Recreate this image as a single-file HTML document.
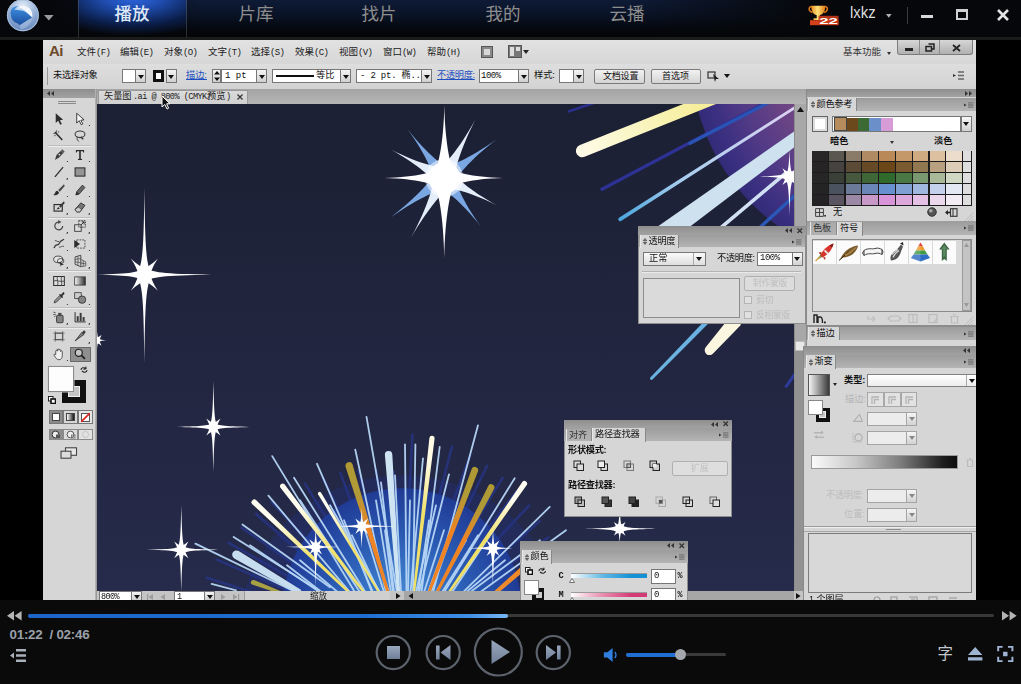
<!DOCTYPE html><html lang="zh"><head><meta charset="utf-8"><title>player</title><style>
*{box-sizing:border-box;margin:0;padding:0}
html,body{width:1021px;height:684px;overflow:hidden;background:#000}
body{font-family:"Liberation Sans","Noto Sans CJK SC",sans-serif;position:relative}
div,span,svg{position:absolute}
.t{white-space:nowrap;line-height:1;font-family:"Liberation Sans","Noto Sans CJK SC",sans-serif}
.m{white-space:nowrap;line-height:1;font-family:"Liberation Mono","Noto Sans CJK SC",monospace}
#top{left:0;top:0;width:1021px;height:39.5px;background:linear-gradient(rgba(0,0,0,0) 0,rgba(0,0,0,0) 37.5px,#1b1b1b 37.5px,#1b1b1b 100%),linear-gradient(90deg,#06070a 0,#06070a 5%,rgba(6,7,10,0) 20%,rgba(6,7,10,0) 62%,#06070a 80%),linear-gradient(#0e1b36 0,#0a1428 35%,#05080f 70%,#040404 100%)}
#bot{left:0;top:600px;width:1021px;height:84px;background:#0a0a0a}
#vid{left:43px;top:40px;width:933px;height:560px;background:#d8d8d8;overflow:hidden}
#vin{left:0;top:0;width:933px;height:560px;filter:blur(.6px)}
.in{background:#fff;border:1px solid #777}
.dd{background:linear-gradient(#f4f4f4,#d0d0d0);border:1px solid #777}
.btn{background:linear-gradient(#f2f2f2,#d4d4d4);border:1px solid #7a7a7a;border-radius:2px}
.ph{background:linear-gradient(#8e8e8e,#a2a2a2)}
.tabrow{background:linear-gradient(#9c9c9c,#b4b4b4)}
.tab{background:#d6d6d6}
.panel{background:#d6d6d6}
</style></head><body>
<div id="top"><div style="left:79px;top:0px;width:108px;height:39px;background:radial-gradient(ellipse 90% 100% at 50% -8%,#2c66de 0,#2150b6 28%,#14357c 52%,#0a1c44 74%,rgba(5,8,16,0) 100%);"></div><div style="left:78px;top:0px;width:1px;height:38px;background:linear-gradient(#3a4a6a,#2a2a2a)"></div><div style="left:186px;top:0px;width:1px;height:38px;background:linear-gradient(#3a4a6a,#2a2a2a)"></div><svg style="left:6px;top:0" width="34" height="33" viewBox="6 0 34 33">
<defs><radialGradient id="orb" cx="50%" cy="22%" r="80%"><stop offset="0" stop-color="#e4edf8"/><stop offset=".42" stop-color="#a6bee0"/><stop offset="1" stop-color="#5f81b8"/></radialGradient>
<linearGradient id="orbb" x1="0" y1="0" x2="0" y2="1"><stop offset="0" stop-color="#3f8fe2"/><stop offset="1" stop-color="#1c4f9e"/></linearGradient></defs>
<circle cx="22.9" cy="15.3" r="16" fill="url(#orb)"/>
<path d="M10.6 13C10.6 8.5 14 6 18.5 6.3L24 9L32.2 17.6L19.6 25.2L17.8 23.4C13.5 22.5 10.6 18.5 10.6 13Z" fill="url(#orbb)"/>
<path d="M15.5 8.2C18 5 25 4.6 29.5 8.2C32 10.5 32.6 14 32.3 17.4L23 9.6C20 7.4 17.5 7.6 15.5 8.2Z" fill="#f4f7fb"/>
<path d="M14 9.5C16 7.2 20 7 22.5 9L26 12C22 10 17 10 14 9.5Z" fill="#dbe7f5" opacity=".85"/>
<path d="M19.6 25.2L32.2 17.6C31 23 27 28 22 29.5C20 28.5 19.5 27 19.6 25.2Z" fill="#a9c1e2" opacity=".55"/>
<circle cx="22.9" cy="15.3" r="15.4" fill="none" stroke="#a9bfdd" stroke-width="1.2" opacity=".85"/>
</svg><svg style="left:44px;top:14.5px" width="10" height="6"><path d="M0 0H9.6L4.8 5.6Z" fill="#9a9a9a"/></svg><span class="t" style="left:114.5px;top:6px;font-size:17.5px;color:#dfe8f6;font-weight:500">播放</span><span class="t" style="left:238.5px;top:6px;font-size:17.5px;color:#8e8e8e;">片库</span><span class="t" style="left:361.5px;top:6px;font-size:17.5px;color:#8e8e8e;">找片</span><span class="t" style="left:485.5px;top:6px;font-size:17.5px;color:#8e8e8e;">我的</span><span class="t" style="left:609.5px;top:6px;font-size:17.5px;color:#8e8e8e;">云播</span><svg style="left:806px;top:3px" width="34" height="24" viewBox="806 3 34 24">
<defs><linearGradient id="cup" x1="0" y1="0" x2="1" y2="0"><stop offset="0" stop-color="#e98a1c"/><stop offset=".45" stop-color="#ffe27a"/><stop offset="1" stop-color="#e07a14"/></linearGradient></defs>
<path d="M811.5 6.5C808.5 6.5 808 11 812.5 12.5M825 6.5C828 6.5 828.5 11 824 12.5" fill="none" stroke="#d8761a" stroke-width="1.6"/>
<path d="M811.2 5.8H825.3C825.3 11.5 823 14.5 819.8 15.3V18.3H823V20H813.5V18.3H816.7V15.3C813.5 14.5 811.2 11.5 811.2 5.8Z" fill="url(#cup)"/>
<path d="M810 20.2H838.5V25.2H810Z" fill="#d6401a"/>
<path d="M818.5 15.8H838.5V24.6H818.5Z" fill="#c8381a" opacity=".9"/>
<text x="819.3" y="24" font-family="Liberation Sans,sans-serif" font-weight="bold" font-size="9.6" fill="#fff" textLength="18.6" lengthAdjust="spacingAndGlyphs">22</text>
</svg><span class="t" style="left:850px;top:4px;font-size:17px;color:#dcdcdc;transform:scaleX(.875);transform-origin:0 0">lxkz</span><svg style="left:885.5px;top:14px" width="6" height="4"><path d="M0 0H5.6L2.8 3.8Z" fill="#b0b0b0"/></svg><div style="left:907px;top:7px;width:1px;height:17px;background:#3c3c3c"></div><div style="left:921px;top:15px;width:12px;height:3px;background:#d8d8d8"></div><div style="left:956px;top:9px;width:12px;height:11px;border:2px solid #d0d0d0;border-top-width:3px"></div><svg style="left:996px;top:8px" width="14" height="14"><path d="M2 2L12 12M12 2L2 12" stroke="#e4e4e4" stroke-width="2.6"/></svg></div>
<div id="bot"><svg style="left:6.7px;top:11.3px" width="16" height="10"><path d="M7 0V9.5L0 4.75ZM14.6 0V9.5L7.6 4.75Z" fill="#b4b4b4"/></svg><svg style="left:1001.5px;top:11.3px" width="16" height="10"><path d="M0 0V9.5L7 4.75ZM7.6 0V9.5L14.6 4.75Z" fill="#b4b4b4"/></svg><div style="left:28px;top:14px;width:966px;height:3px;background:#383838;border-radius:2px"></div><div style="left:28px;top:13.5px;width:480px;height:4px;background:linear-gradient(90deg,#1c66c8 0,#1f6fd2 70%,#3f8fe6 92%,#7ab6f4 100%);border-radius:2px"></div><span class="t" style="left:9.5px;top:27.5px;font-size:13.4px;color:#9aa0aa;font-weight:bold;letter-spacing:-.25px">01:22&nbsp; / 02:46</span><svg style="left:10px;top:49px" width="17" height="14"><path d="M0 6.5L4 3.5V9.5ZM6 0H16V2.6H6ZM6 5.2H16V7.8H6ZM6 10.4H16V13H6Z" fill="#a9b0ba"/></svg><svg style="left:370px;top:22px" width="210" height="62" viewBox="370 622 210 62">
<defs><linearGradient id="ic" x1="0" y1="0" x2="0" y2="1"><stop offset="0" stop-color="#9aa8bc"/><stop offset="1" stop-color="#6f7f98"/></linearGradient></defs>
<g fill="none" stroke="#5d636c" stroke-width="2.2">
<circle cx="393.3" cy="652.6" r="16.6"/><circle cx="443.2" cy="652.6" r="16.6"/><circle cx="498.3" cy="652" r="23.5"/><circle cx="553.3" cy="652.6" r="16.6"/></g>
<rect x="387" y="646" width="13" height="13" fill="url(#ic)"/>
<path d="M436 645.5H439.6V659.5H436ZM450.5 645V660L440.5 652.5Z" fill="url(#ic)"/>
<path d="M491.5 640V664L510 652Z" fill="url(#ic)"/>
<path d="M557 645.5H560.6V659.5H557ZM546 645V660L556 652.5Z" fill="url(#ic)"/>
</svg><svg style="left:603.3px;top:46.6px" width="17.5" height="15.8" viewBox="0 0 20 18"><path d="M1 6H5L11 1V17L5 12H1Z" fill="#2f7ee0"/><path d="M13.5 5.5C15 7.5 15 10.5 13.5 12.5" stroke="#2f7ee0" stroke-width="1.6" fill="none"/></svg><div style="left:626px;top:53px;width:100px;height:3px;background:#3a3a3a;border-radius:2px"></div><div style="left:626px;top:52.5px;width:54px;height:4px;background:#1f6fd2;border-radius:2px"></div><div style="left:675px;top:49px;width:11px;height:11px;background:#a4a8ae;border-radius:50%"></div><span class="t" style="left:937.5px;top:46px;font-size:15.5px;color:#c4c8ce;">字</span><svg style="left:968px;top:47.4px" width="15" height="14"><path d="M7.2 0L14.4 8H0ZM0 10.2H14.4V13.4H0Z" fill="#9fb4d2"/></svg><svg style="left:997.3px;top:646px;top:46px" width="16.6" height="16" viewBox="0 0 18 18"><g fill="none" stroke="#9fb4d2" stroke-width="2.2"><path d="M1 6V1H6M12 1H17V6M17 12V17H12M6 17H1V12"/></g><rect x="6.5" y="6.5" width="5" height="5" fill="#9fb4d2"/></svg></div>
<div id="vid"><div id="vin"><div style="left:0px;top:0px;width:933px;height:24.5px;background:linear-gradient(#e2e2e2,#d6d6d6)"></div><span class="t" style="left:6px;top:3.4px;font-size:15px;color:#6e4a2a;font-weight:bold;letter-spacing:-.5px">Ai</span><span class="t" style="left:34px;top:7px;font-size:9.5px;color:#1a1a1a;">文件<span style="position:static;font-family:'Liberation Mono',monospace;font-size:9px;letter-spacing:-.6px">(F)</span></span><span class="t" style="left:77px;top:7px;font-size:9.5px;color:#1a1a1a;">编辑<span style="position:static;font-family:'Liberation Mono',monospace;font-size:9px;letter-spacing:-.6px">(E)</span></span><span class="t" style="left:121px;top:7px;font-size:9.5px;color:#1a1a1a;">对象<span style="position:static;font-family:'Liberation Mono',monospace;font-size:9px;letter-spacing:-.6px">(O)</span></span><span class="t" style="left:165px;top:7px;font-size:9.5px;color:#1a1a1a;">文字<span style="position:static;font-family:'Liberation Mono',monospace;font-size:9px;letter-spacing:-.6px">(T)</span></span><span class="t" style="left:208px;top:7px;font-size:9.5px;color:#1a1a1a;">选择<span style="position:static;font-family:'Liberation Mono',monospace;font-size:9px;letter-spacing:-.6px">(S)</span></span><span class="t" style="left:252px;top:7px;font-size:9.5px;color:#1a1a1a;">效果<span style="position:static;font-family:'Liberation Mono',monospace;font-size:9px;letter-spacing:-.6px">(C)</span></span><span class="t" style="left:296px;top:7px;font-size:9.5px;color:#1a1a1a;">视图<span style="position:static;font-family:'Liberation Mono',monospace;font-size:9px;letter-spacing:-.6px">(V)</span></span><span class="t" style="left:340px;top:7px;font-size:9.5px;color:#1a1a1a;">窗口<span style="position:static;font-family:'Liberation Mono',monospace;font-size:9px;letter-spacing:-.6px">(W)</span></span><span class="t" style="left:384px;top:7px;font-size:9.5px;color:#1a1a1a;">帮助<span style="position:static;font-family:'Liberation Mono',monospace;font-size:9px;letter-spacing:-.6px">(H)</span></span><div style="left:438px;top:6px;width:12px;height:12px;background:#8a8a8a;border:1px solid #555"></div><div style="left:441px;top:9px;width:6px;height:6px;background:#d8d8d8"></div><div style="left:465px;top:5px;width:14px;height:13px;background:#777;border:1px solid #555"></div><div style="left:467px;top:7px;width:4px;height:9px;background:#ddd"></div><div style="left:473px;top:7px;width:4px;height:4px;background:#ddd"></div><svg style="left:480px;top:10px" width="6" height="4" viewBox="0 0 6 4"><path d="M0 0H6L3 4Z" fill="#222"/></svg><span class="t" style="left:800px;top:7px;font-size:9.5px;color:#333;">基本功能</span><svg style="left:844px;top:12px" width="4" height="3" viewBox="0 0 4 3"><path d="M0 0H4L2 3Z" fill="#333"/></svg><div style="left:854px;top:0px;width:76px;height:15px;background:linear-gradient(#d6d6d6,#b0b0b0);border:1px solid #7c7c7c;border-top:0;border-radius:0 0 3px 3px"></div><div style="left:876px;top:0px;width:1px;height:14px;background:#8a8a8a"></div><div style="left:896px;top:0px;width:1px;height:14px;background:#8a8a8a"></div><div style="left:862px;top:8px;width:8px;height:2.5px;background:#222"></div><svg style="left:882px;top:3px" width="10" height="9" viewBox="0 0 10 9"><path d="M3.5 1H9V6H7" fill="none" stroke="#222" stroke-width="1.5"/><rect x="1" y="3.5" width="5.5" height="4.5" fill="none" stroke="#222" stroke-width="1.5"/></svg><svg style="left:909px;top:4px" width="9" height="8" viewBox="0 0 9 8"><path d="M1 1L8 7M8 1L1 7" stroke="#222" stroke-width="1.8"/></svg><div style="left:0px;top:24px;width:933px;height:1px;background:#a8a8a8"></div><div style="left:0px;top:24.2px;width:933px;height:24.5px;background:linear-gradient(#dedede,#d2d2d2)"></div><div style="left:4px;top:27.2px;width:1px;height:18px;background:#999"></div><span class="t" style="left:10px;top:31.2px;font-size:9.2px;color:#111;letter-spacing:-.3px">未选择对象</span><div style="left:79px;top:29.2px;width:14px;height:14px;background:#fff;border:1px solid #777"></div><div class="dd" style="left:92px;top:29.2px;width:11px;height:14px;"><svg style="left:1.5px;top:4.5px" width="6" height="4"><path d="M0 0H6L3 4Z" fill="#111"/></svg></div><div style="left:109.5px;top:29.7px;width:11.5px;height:12px;background:#fff;border:3px solid #111"></div><div class="dd" style="left:122.5px;top:29.2px;width:11px;height:14px;"><svg style="left:1.5px;top:4.5px" width="6" height="4"><path d="M0 0H6L3 4Z" fill="#111"/></svg></div><span class="t" style="left:143px;top:31.2px;font-size:9.2px;color:#1d4fc0;text-decoration:underline">描边:</span><div class="dd" style="left:169px;top:29.2px;width:9px;height:14px;"></div><svg style="left:170.5px;top:31.2px" width="6" height="10" viewBox="0 0 6 10"><path d="M3 0L6 3.5H0ZM3 10L6 6.5H0Z" fill="#111"/></svg><div class="in" style="left:178px;top:29.2px;width:36px;height:14px;"></div><span class="m" style="left:182px;top:31.7px;font-size:9px;color:#111;">1 pt</span><div class="dd" style="left:213px;top:29.2px;width:11px;height:14px;"><svg style="left:1.5px;top:4.5px" width="6" height="4"><path d="M0 0H6L3 4Z" fill="#111"/></svg></div><div class="in" style="left:229px;top:29.2px;width:69px;height:14px;"></div><div style="left:233px;top:35.2px;width:38px;height:2px;background:#111"></div><span class="t" style="left:273px;top:31.2px;font-size:9.2px;color:#111;">等比</span><div class="dd" style="left:297px;top:29.2px;width:11px;height:14px;"><svg style="left:1.5px;top:4.5px" width="6" height="4"><path d="M0 0H6L3 4Z" fill="#111"/></svg></div><div class="in" style="left:313px;top:29.2px;width:66px;height:14px;"></div><span class="m" style="left:317px;top:31.7px;font-size:9px;color:#111;letter-spacing:-.2px">- 2 pt. 椭...</span><div class="dd" style="left:378px;top:29.2px;width:11px;height:14px;"><svg style="left:1.5px;top:4.5px" width="6" height="4"><path d="M0 0H6L3 4Z" fill="#111"/></svg></div><span class="t" style="left:394px;top:31.2px;font-size:9.2px;color:#1d4fc0;text-decoration:underline;letter-spacing:-.3px">不透明度:</span><div class="in" style="left:436px;top:29.2px;width:40px;height:14px;"></div><span class="m" style="left:438px;top:31.7px;font-size:9px;color:#111;letter-spacing:-.5px">100%</span><div class="dd" style="left:475px;top:29.2px;width:11px;height:14px;"><svg style="left:1.5px;top:4.5px" width="6" height="4"><path d="M0 0H6L3 4Z" fill="#111"/></svg></div><span class="t" style="left:491px;top:31.2px;font-size:9.2px;color:#111;">样式:</span><div style="left:516px;top:29.2px;width:15px;height:14px;background:#fff;border:1px solid #777"></div><div class="dd" style="left:530px;top:29.2px;width:11px;height:14px;"><svg style="left:1.5px;top:4.5px" width="6" height="4"><path d="M0 0H6L3 4Z" fill="#111"/></svg></div><div class="btn" style="left:551px;top:28.7px;width:51px;height:15px;"></div><span class="t" style="left:560px;top:31.7px;font-size:9px;color:#111;letter-spacing:-.2px">文档设置</span><div class="btn" style="left:608px;top:28.7px;width:50px;height:15px;"></div><span class="t" style="left:619px;top:31.7px;font-size:9px;color:#111;">首选项</span><svg style="left:664px;top:30.2px" width="14" height="12" viewBox="0 0 14 12"><rect x="1" y="2" width="7" height="6" fill="none" stroke="#333" stroke-width="1.2"/><path d="M6 4L12 9L9 9L8 12Z" fill="#222"/></svg><svg style="left:681px;top:34.2px" width="6" height="4" viewBox="0 0 6 4"><path d="M0 0H6L3 4Z" fill="#111"/></svg><svg style="left:910px;top:31.2px" width="12" height="9" viewBox="0 0 12 9"><path d="M0 3L3 4.5L0 6Z" fill="#333"/><path d="M5 1H11M5 4.5H11M5 8H11" stroke="#666" stroke-width="1.6"/></svg><div style="left:52px;top:48.8px;width:711px;height:15px;background:linear-gradient(#a4a4a4,#b6b6b6)"></div><div style="left:54.5px;top:49.5px;width:150.5px;height:14.4px;background:linear-gradient(#dadada,#d0d0d0);border:1px solid #999;border-bottom:0"></div><span class="t" style="left:61px;top:51.5px;font-size:9.2px;color:#222;">矢量图</span><span class="m" style="left:90px;top:52.5px;font-size:8.6px;color:#222;letter-spacing:-.55px">.ai @ 800% (CMYK/</span><span class="t" style="left:164px;top:51.5px;font-size:9.2px;color:#222;">预览</span><span class="m" style="left:183px;top:52.5px;font-size:8.6px;color:#222;">)</span><svg style="left:194px;top:54.0px" width="6" height="6" viewBox="0 0 6 6"><path d="M.5 .5L5.5 5.5M5.5 .5L.5 5.5" stroke="#333" stroke-width="1.2"/></svg><div style="left:0px;top:48.8px;width:52px;height:512px;background:#d6d6d6"></div><div class="ph" style="left:0px;top:48.8px;width:52px;height:9px;"></div><svg style="left:4px;top:51.0px" width="7" height="5" viewBox="0 0 7 5"><path d="M3 0V5L0 2.5ZM7 0V5L4 2.5Z" fill="#333"/></svg><div style="left:51.5px;top:48.8px;width:2.5px;height:512px;background:linear-gradient(90deg,#bdbdbd,#8c8c8c)"></div><div style="left:15px;top:60.5px;width:18px;height:1px;background:#8a8a8a"></div><div style="left:15px;top:62.5px;width:18px;height:1px;background:#8a8a8a"></div><div style="left:5px;top:105.0px;width:43px;height:1px;background:#bdbdbd;border-bottom:1px solid #ececec;height:2px"></div><div style="left:5px;top:176.5px;width:43px;height:1px;background:#bdbdbd;border-bottom:1px solid #ececec;height:2px"></div><div style="left:5px;top:230.0px;width:43px;height:1px;background:#bdbdbd;border-bottom:1px solid #ececec;height:2px"></div><div style="left:5px;top:267.0px;width:43px;height:1px;background:#bdbdbd;border-bottom:1px solid #ececec;height:2px"></div><div style="left:5px;top:286.5px;width:43px;height:1px;background:#bdbdbd;border-bottom:1px solid #ececec;height:2px"></div><div style="left:27px;top:306.5px;width:20.5px;height:15px;background:#8f8f8f;border:1px solid #6a6a6a"></div><svg style="left:7.5px;top:70.5px" width="16" height="16" viewBox="0 0 16 16"><g transform="translate(8 8) scale(.82) translate(-8 -8)" opacity=".86"><path d="M4 1L4 13L7 10L9.5 15L11.5 14L9 9.5L13 9Z" fill="#111"/></g></svg><svg style="left:29.3px;top:70.5px" width="16" height="16" viewBox="0 0 16 16"><g transform="translate(8 8) scale(.82) translate(-8 -8)" opacity=".86"><path d="M4 1L4 13L7 10L9.5 15L11.5 14L9 9.5L13 9Z" fill="#fff" stroke="#111" stroke-width="1.1"/></g></svg><svg style="left:44.5px;top:83.5px" width="2.6" height="2.6" viewBox="0 0 2.6 2.6"><path d="M2.6 0V2.6H0Z" fill="#222"/></svg><svg style="left:7.5px;top:88.0px" width="16" height="16" viewBox="0 0 16 16"><g transform="translate(8 8) scale(.82) translate(-8 -8)" opacity=".86"><path d="M3 3L12 13" stroke="#111" stroke-width="1.8"/><path d="M5 1V4M1 5H4M8 2L7 4M2 8L4 7" stroke="#333" stroke-width="1"/></g></svg><svg style="left:29.3px;top:88.0px" width="16" height="16" viewBox="0 0 16 16"><g transform="translate(8 8) scale(.82) translate(-8 -8)" opacity=".86"><ellipse cx="8" cy="6" rx="6" ry="4" fill="none" stroke="#222" stroke-width="1.3"/><path d="M5 9C3 12 6 14 7 15" fill="none" stroke="#222" stroke-width="1.2"/><path d="M9 8L13 12L10 12Z" fill="#111"/></g></svg><svg style="left:7.5px;top:106.5px" width="16" height="16" viewBox="0 0 16 16"><g transform="translate(8 8) scale(.82) translate(-8 -8)" opacity=".86"><path d="M3 14L5 8L10 3L13 6L8 11Z" fill="#222"/><circle cx="8.5" cy="7.5" r="1.1" fill="#ddd"/><path d="M10 3L12 1L15 4L13 6" fill="#444"/></g></svg><svg style="left:29.3px;top:106.5px" width="16" height="16" viewBox="0 0 16 16"><g transform="translate(8 8) scale(.82) translate(-8 -8)" opacity=".86"><path d="M3 2H13V5H12L11.5 3.5H9V12.5L10.5 13V14H5.5V13L7 12.5V3.5H4.5L4 5H3Z" fill="#111"/></g></svg><svg style="left:22.5px;top:119.5px" width="2.6" height="2.6" viewBox="0 0 2.6 2.6"><path d="M2.6 0V2.6H0Z" fill="#222"/></svg><svg style="left:44.5px;top:119.5px" width="2.6" height="2.6" viewBox="0 0 2.6 2.6"><path d="M2.6 0V2.6H0Z" fill="#222"/></svg><svg style="left:7.5px;top:124.3px" width="16" height="16" viewBox="0 0 16 16"><g transform="translate(8 8) scale(.82) translate(-8 -8)" opacity=".86"><path d="M3 14L13 2" stroke="#111" stroke-width="1.5"/></g></svg><svg style="left:29.3px;top:124.3px" width="16" height="16" viewBox="0 0 16 16"><g transform="translate(8 8) scale(.82) translate(-8 -8)" opacity=".86"><rect x="2" y="3" width="12" height="10" fill="#8a8a8a" stroke="#111" stroke-width="1.3"/></g></svg><svg style="left:22.5px;top:137.3px" width="2.6" height="2.6" viewBox="0 0 2.6 2.6"><path d="M2.6 0V2.6H0Z" fill="#222"/></svg><svg style="left:7.5px;top:141.8px" width="16" height="16" viewBox="0 0 16 16"><g transform="translate(8 8) scale(.82) translate(-8 -8)" opacity=".86"><path d="M14 1L7 8L9 10L15 3Z" fill="#333"/><path d="M6 9C3 9 4 13 1 14C5 15 8 13 8 11Z" fill="#111"/></g></svg><svg style="left:29.3px;top:141.8px" width="16" height="16" viewBox="0 0 16 16"><g transform="translate(8 8) scale(.82) translate(-8 -8)" opacity=".86"><path d="M3 14L4 10L11 2L14 5L7 13Z" fill="#555" stroke="#111" stroke-width="1"/><path d="M3 14L4 10L7 13Z" fill="#111"/></g></svg><svg style="left:22.5px;top:154.8px" width="2.6" height="2.6" viewBox="0 0 2.6 2.6"><path d="M2.6 0V2.6H0Z" fill="#222"/></svg><svg style="left:44.5px;top:154.8px" width="2.6" height="2.6" viewBox="0 0 2.6 2.6"><path d="M2.6 0V2.6H0Z" fill="#222"/></svg><svg style="left:7.5px;top:159.4px" width="16" height="16" viewBox="0 0 16 16"><g transform="translate(8 8) scale(.82) translate(-8 -8)" opacity=".86"><rect x="2" y="5" width="10" height="8" fill="none" stroke="#111" stroke-width="1.4"/><path d="M14 1L8 7L10 9L15 3Z" fill="#222"/><path d="M7 8L5 11L9 10Z" fill="#111"/></g></svg><svg style="left:29.3px;top:159.4px" width="16" height="16" viewBox="0 0 16 16"><g transform="translate(8 8) scale(.82) translate(-8 -8)" opacity=".86"><path d="M2 11L9 3L14 6L8 14H4Z" fill="#666" stroke="#111" stroke-width="1.1"/><path d="M2 11L6 8L10 11L8 14H4Z" fill="#ccc" stroke="#111" stroke-width=".8"/></g></svg><svg style="left:22.5px;top:172.4px" width="2.6" height="2.6" viewBox="0 0 2.6 2.6"><path d="M2.6 0V2.6H0Z" fill="#222"/></svg><svg style="left:44.5px;top:172.4px" width="2.6" height="2.6" viewBox="0 0 2.6 2.6"><path d="M2.6 0V2.6H0Z" fill="#222"/></svg><svg style="left:7.5px;top:178.0px" width="16" height="16" viewBox="0 0 16 16"><g transform="translate(8 8) scale(.82) translate(-8 -8)" opacity=".86"><path d="M12.5 8A4.8 4.8 0 1 1 8 3.2" fill="none" stroke="#333" stroke-width="1.5"/><path d="M7 .8L11 3.2L7 5.6Z" fill="#333"/></g></svg><svg style="left:29.3px;top:178.0px" width="16" height="16" viewBox="0 0 16 16"><g transform="translate(8 8) scale(.82) translate(-8 -8)" opacity=".86"><rect x="1.5" y="6.5" width="8" height="8" fill="#ddd" stroke="#222" stroke-width="1.1"/><rect x="6.5" y="1.5" width="8" height="8" fill="none" stroke="#222" stroke-width="1.1" stroke-dasharray="2 1"/><path d="M9 7L13 3M13 3H10M13 3V6" stroke="#111" stroke-width="1.1" fill="none"/></g></svg><svg style="left:22.5px;top:191.0px" width="2.6" height="2.6" viewBox="0 0 2.6 2.6"><path d="M2.6 0V2.6H0Z" fill="#222"/></svg><svg style="left:44.5px;top:191.0px" width="2.6" height="2.6" viewBox="0 0 2.6 2.6"><path d="M2.6 0V2.6H0Z" fill="#222"/></svg><svg style="left:7.5px;top:195.6px" width="16" height="16" viewBox="0 0 16 16"><g transform="translate(8 8) scale(.82) translate(-8 -8)" opacity=".86"><path d="M2 13C4 6 7 12 9 6C10 3 13 4 14 2" fill="none" stroke="#222" stroke-width="1.6"/><path d="M3 4C5 3 6 6 8 5M8 12C10 12 12 10 14 11" fill="none" stroke="#444" stroke-width="1.2"/></g></svg><svg style="left:29.3px;top:195.6px" width="16" height="16" viewBox="0 0 16 16"><g transform="translate(8 8) scale(.82) translate(-8 -8)" opacity=".86"><rect x="4" y="3" width="10" height="10" fill="none" stroke="#222" stroke-width="1.1" stroke-dasharray="2 1.4"/><path d="M1 3L8 8L1 13Z" fill="#111"/></g></svg><svg style="left:22.5px;top:208.6px" width="2.6" height="2.6" viewBox="0 0 2.6 2.6"><path d="M2.6 0V2.6H0Z" fill="#222"/></svg><svg style="left:44.5px;top:208.6px" width="2.6" height="2.6" viewBox="0 0 2.6 2.6"><path d="M2.6 0V2.6H0Z" fill="#222"/></svg><svg style="left:7.5px;top:213.4px" width="16" height="16" viewBox="0 0 16 16"><g transform="translate(8 8) scale(.82) translate(-8 -8)" opacity=".86"><ellipse cx="7" cy="6" rx="5.5" ry="4" fill="#e8e8e8" stroke="#222" stroke-width="1.1"/><ellipse cx="10" cy="8" rx="4" ry="3" fill="none" stroke="#222" stroke-width="1"/><path d="M9 9L14 13L11 13L10 15Z" fill="#111"/></g></svg><svg style="left:29.3px;top:213.4px" width="16" height="16" viewBox="0 0 16 16"><g transform="translate(8 8) scale(.82) translate(-8 -8)" opacity=".86"><path d="M2 3L9 1V15L2 12Z" fill="none" stroke="#222" stroke-width="1.1"/><path d="M9 6L15 9V14L9 15M2 6L9 5M2 9L9 10M5.5 2V13.5M9 10.5L15 11.5M12 7.5V14.5" fill="none" stroke="#333" stroke-width=".9"/></g></svg><svg style="left:22.5px;top:226.4px" width="2.6" height="2.6" viewBox="0 0 2.6 2.6"><path d="M2.6 0V2.6H0Z" fill="#222"/></svg><svg style="left:44.5px;top:226.4px" width="2.6" height="2.6" viewBox="0 0 2.6 2.6"><path d="M2.6 0V2.6H0Z" fill="#222"/></svg><svg style="left:7.5px;top:232.5px" width="16" height="16" viewBox="0 0 16 16"><g transform="translate(8 8) scale(.82) translate(-8 -8)" opacity=".86"><rect x="1.5" y="2.5" width="13" height="11" fill="#ddd" stroke="#111" stroke-width="1.2"/><path d="M1.5 8C5 6 10 10 14.5 8M6 2.5C5 6 8 10 6 13.5M11 2.5C10 6 12 10 11 13.5" fill="none" stroke="#222" stroke-width="1"/></g></svg><svg style="left:29.3px;top:232.5px" width="16" height="16" viewBox="0 0 16 16"><g transform="translate(8 8) scale(.82) translate(-8 -8)" opacity=".86"><defs><linearGradient id="tg" x1="0" x2="1"><stop offset="0" stop-color="#fff"/><stop offset="1" stop-color="#111"/></linearGradient></defs><rect x="1.5" y="3" width="13" height="10" fill="url(#tg)" stroke="#222" stroke-width="1"/></g></svg><svg style="left:7.5px;top:249.5px" width="16" height="16" viewBox="0 0 16 16"><g transform="translate(8 8) scale(.82) translate(-8 -8)" opacity=".86"><path d="M2 14L3 11L9 5L11 7L5 13Z" fill="#888" stroke="#111" stroke-width=".9"/><path d="M8 4L12 8L13 7L12 5.5L14.5 3C15 1.5 13.5 .5 12.5 1.5L10.5 4L9 3Z" fill="#111"/></g></svg><svg style="left:29.3px;top:249.5px" width="16" height="16" viewBox="0 0 16 16"><g transform="translate(8 8) scale(.82) translate(-8 -8)" opacity=".86"><rect x="1.5" y="1.5" width="8" height="7" fill="#ccc" stroke="#222" stroke-width="1"/><circle cx="10.5" cy="10" r="4.5" fill="#777" stroke="#111" stroke-width="1"/></g></svg><svg style="left:22.5px;top:262.5px" width="2.6" height="2.6" viewBox="0 0 2.6 2.6"><path d="M2.6 0V2.6H0Z" fill="#222"/></svg><svg style="left:44.5px;top:262.5px" width="2.6" height="2.6" viewBox="0 0 2.6 2.6"><path d="M2.6 0V2.6H0Z" fill="#222"/></svg><svg style="left:7.5px;top:269.0px" width="16" height="16" viewBox="0 0 16 16"><g transform="translate(8 8) scale(.82) translate(-8 -8)" opacity=".86"><rect x="5" y="6" width="8" height="9" rx="1.2" fill="#777" stroke="#111" stroke-width="1"/><rect x="7" y="3" width="4" height="3" fill="#333"/><path d="M1 2L4 3M1 5H4M2 8L4 6.5" stroke="#333" stroke-width="1"/></g></svg><svg style="left:29.3px;top:269.0px" width="16" height="16" viewBox="0 0 16 16"><g transform="translate(8 8) scale(.82) translate(-8 -8)" opacity=".86"><path d="M2 2V14H15" fill="none" stroke="#111" stroke-width="1.2"/><rect x="4" y="7" width="2.4" height="6" fill="#222"/><rect x="7.6" y="3" width="2.4" height="10" fill="#222"/><rect x="11.2" y="8" width="2.4" height="5" fill="#222"/></g></svg><svg style="left:22.5px;top:282.0px" width="2.6" height="2.6" viewBox="0 0 2.6 2.6"><path d="M2.6 0V2.6H0Z" fill="#222"/></svg><svg style="left:44.5px;top:282.0px" width="2.6" height="2.6" viewBox="0 0 2.6 2.6"><path d="M2.6 0V2.6H0Z" fill="#222"/></svg><svg style="left:7.5px;top:288.0px" width="16" height="16" viewBox="0 0 16 16"><g transform="translate(8 8) scale(.82) translate(-8 -8)" opacity=".86"><rect x="3.5" y="4.5" width="9" height="8" fill="none" stroke="#222" stroke-width="1.1"/><path d="M1 4.5H15M1 12.5H15M3.5 2V15M12.5 2V15" stroke="#444" stroke-width=".8"/></g></svg><svg style="left:29.3px;top:288.0px" width="16" height="16" viewBox="0 0 16 16"><g transform="translate(8 8) scale(.82) translate(-8 -8)" opacity=".86"><path d="M2 14L10 4L13 6Z" fill="#777" stroke="#111" stroke-width="1"/><path d="M10 4L13 1L15 3L13 6Z" fill="#222"/></g></svg><svg style="left:44.5px;top:301.0px" width="2.6" height="2.6" viewBox="0 0 2.6 2.6"><path d="M2.6 0V2.6H0Z" fill="#222"/></svg><svg style="left:7.5px;top:305.8px" width="16" height="16" viewBox="0 0 16 16"><g transform="translate(8 8) scale(.82) translate(-8 -8)" opacity=".86"><path d="M4 8V4.5C4 3 6 3 6 4.5V3C6 1.5 8 1.5 8 3V3.5C8 2 10 2 10 3.5V5C10 3.8 12 3.8 12 5.2V10C12 13 10.5 15 8 15C5.5 15 4.5 13.5 2 9.5C1.5 8.5 3 7.5 4 9Z" fill="#f4f4f4" stroke="#222" stroke-width="1"/></g></svg><svg style="left:29.3px;top:305.8px" width="16" height="16" viewBox="0 0 16 16"><g transform="translate(8 8) scale(.82) translate(-8 -8)" opacity=".86"><circle cx="6.5" cy="6.5" r="4.3" fill="#cfcfcf" stroke="#111" stroke-width="1.5"/><path d="M9.8 9.8L14 14" stroke="#111" stroke-width="2.2"/></g></svg><svg style="left:22.5px;top:318.8px" width="2.6" height="2.6" viewBox="0 0 2.6 2.6"><path d="M2.6 0V2.6H0Z" fill="#222"/></svg><div style="left:19px;top:340.0px;width:23.5px;height:22.5px;background:#111"></div><div style="left:24.5px;top:345.5px;width:12.5px;height:11.5px;background:#c4c4c4;border:1px solid #eee"></div><div style="left:4.5px;top:325.5px;width:26.5px;height:26px;background:#fdfdfd;border:1px solid #8a8a8a;box-shadow:0 0 0 .5px #ccc"></div><svg style="left:37px;top:326.0px" width="8" height="8" viewBox="0 0 8 8"><path d="M1 4C1 1.5 4 1 6 3M6 3L3.5 3.2M6 3L5.8 .6M7 4C7 6.5 4 7 2 5" fill="none" stroke="#222" stroke-width="1.1"/></svg><svg style="left:5px;top:356.0px" width="8" height="8" viewBox="0 0 8 8"><rect x=".5" y=".5" width="4.5" height="4.5" fill="#fff" stroke="#222"/><rect x="3" y="3" width="4.5" height="4.5" fill="#fff" stroke="#111" stroke-width="1.6"/></svg><div style="left:5.5px;top:370.0px;width:14.8px;height:13.5px;background:#8c8c8c;border:1px solid #777"></div><div style="left:20.3px;top:370.0px;width:14.8px;height:13.5px;background:#d6d6d6;border:1px solid #777"></div><div style="left:35.1px;top:370.0px;width:14.8px;height:13.5px;background:#e6e6e6;border:1px solid #777"></div><div style="left:8.5px;top:372.5px;width:8.5px;height:8.5px;background:#fff;border:1px solid #444"></div><div style="left:23px;top:372.5px;width:8.5px;height:8.5px;background:linear-gradient(90deg,#fff,#111);border:1px solid #444"></div><svg style="left:37.5px;top:372.5px" width="9" height="9" viewBox="0 0 9 9"><rect x=".5" y=".5" width="8" height="8" fill="#fff" stroke="#555"/><path d="M0 9L9 0" stroke="#e0201c" stroke-width="1.6"/></svg><div style="left:5.5px;top:388.5px;width:14.8px;height:11.5px;background:#8c8c8c;border:1px solid #8a8a8a"></div><div style="left:20.3px;top:388.5px;width:14.8px;height:11.5px;background:#dcdcdc;border:1px solid #8a8a8a"></div><div style="left:35.1px;top:388.5px;width:14.8px;height:11.5px;background:#e2e2e2;border:1px solid #8a8a8a"></div><svg style="left:8px;top:390.0px" width="10" height="9" viewBox="0 0 10 9"><circle cx="4.5" cy="4.5" r="3.4" fill="#eee" stroke="#333"/><rect x="5" y="4.5" width="4" height="3.6" fill="#555"/></svg><svg style="left:23px;top:390.0px" width="10" height="9" viewBox="0 0 10 9"><circle cx="4.5" cy="4.5" r="3.4" fill="#eee" stroke="#555"/><rect x="5.5" y="5" width="3.5" height="3" fill="none" stroke="#666" stroke-width=".8"/></svg><svg style="left:38px;top:390.0px" width="10" height="9" viewBox="0 0 10 9"><circle cx="4.5" cy="4.5" r="3" fill="none" stroke="#c4c4c4"/></svg><svg style="left:17px;top:407.0px" width="18" height="12" viewBox="0 0 18 12"><rect x="5.5" y=".8" width="11" height="7.5" fill="#e8e8e8" stroke="#444" stroke-width="1.1"/><rect x="1" y="4.2" width="10" height="7" fill="#dcdcdc" stroke="#444" stroke-width="1.1"/></svg><div style="left:54px;top:550.7px;width:709px;height:9.5px;background:#c4c4c4"></div><div class="in" style="left:56px;top:551.3px;width:33px;height:10px;"></div><span class="m" style="left:58px;top:552.5px;font-size:8.5px;color:#111;letter-spacing:-.6px">800%</span><div class="dd" style="left:88px;top:551.3px;width:11px;height:10px;"><svg style="left:1.5px;top:2.5px" width="6" height="4"><path d="M0 0H6L3 4Z" fill="#111"/></svg></div><svg style="left:104px;top:553.5px" width="22" height="6" viewBox="0 0 22 6"><path d="M0 0H1.2V6H0ZM6 0V6L1.5 3ZM18 0V6L13.5 3Z" fill="#9c9c9c"/></svg><div class="in" style="left:131px;top:551.3px;width:31px;height:10px;"></div><span class="m" style="left:134px;top:552.5px;font-size:8.5px;color:#111;">1</span><div class="dd" style="left:161px;top:551.3px;width:11px;height:10px;"><svg style="left:1.5px;top:2.5px" width="6" height="4"><path d="M0 0H6L3 4Z" fill="#111"/></svg></div><svg style="left:178px;top:553.5px" width="22" height="6" viewBox="0 0 22 6"><path d="M0 0V6L4.5 3ZM12 0V6L16.5 3ZM17 0H18.2V6H17Z" fill="#9c9c9c"/></svg><div style="left:201px;top:550.7px;width:146px;height:9.5px;background:#cfcfcf;border-left:1px solid #9a9a9a"></div><span class="t" style="left:267px;top:552.0px;font-size:8.6px;color:#222;">缩放</span><svg style="left:353px;top:553.0px" width="5" height="6" viewBox="0 0 5 6"><path d="M0 0V6L4.5 3Z" fill="#111"/></svg><div style="left:361px;top:550.7px;width:390px;height:9.5px;background:#a6a6a6"></div><svg style="left:365px;top:553.0px" width="5" height="6" viewBox="0 0 5 6"><path d="M5 0V6L.5 3Z" fill="#111"/></svg><svg style="left:753px;top:553.0px" width="5" height="6" viewBox="0 0 5 6"><path d="M0 0V6L4.5 3Z" fill="#111"/></svg><div style="left:751px;top:63.7px;width:12px;height:487.2px;background:#a8a8a8;border-left:1px solid #8c8c8c"></div><svg style="left:753.5px;top:67.0px" width="7" height="5" viewBox="0 0 7 5"><path d="M3.5 0L7 5H0Z" fill="#111"/></svg><svg style="left:753.5px;top:540.0px" width="7" height="5" viewBox="0 0 7 5"><path d="M3.5 5L7 0H0Z" fill="#111"/></svg><svg style="left:54px;top:63.7px;overflow:hidden" width="697" height="487.1" viewBox="97 103.7 697 487.1"><defs>
<linearGradient id="bg" x1="0" y1="0" x2="0" y2="1"><stop offset="0" stop-color="#1c2033"/><stop offset=".5" stop-color="#21253f"/><stop offset="1" stop-color="#262b4b"/></linearGradient>
<radialGradient id="purp" gradientUnits="userSpaceOnUse" cx="898" cy="57" r="207"><stop offset="0" stop-color="#8c5a86"/><stop offset=".5" stop-color="#7a4a84"/><stop offset=".78" stop-color="#523a86"/><stop offset=".93" stop-color="#3a2f80"/><stop offset="1" stop-color="#332b78"/></radialGradient>
<radialGradient id="blu" gradientUnits="userSpaceOnUse" cx="402" cy="607" r="120"><stop offset="0" stop-color="#60b0ee"/><stop offset=".3" stop-color="#4390de"/><stop offset=".6" stop-color="#2e6ac2"/><stop offset=".85" stop-color="#264ea8"/><stop offset="1" stop-color="#213e96"/></radialGradient>
<linearGradient id="cy1" gradientUnits="userSpaceOnUse" x1="578" y1="150" x2="700" y2="104"><stop offset="0" stop-color="#fdfbe8"/><stop offset="1" stop-color="#f6ee9a"/></linearGradient>
<linearGradient id="lb1" gradientUnits="userSpaceOnUse" x1="620" y1="219" x2="794" y2="113"><stop offset="0" stop-color="#4aa6dc"/><stop offset=".35" stop-color="#a8cdee"/><stop offset="1" stop-color="#dcd2f2"/></linearGradient>
</defs><rect x="97" y="103.7" width="697" height="487.1" fill="url(#bg)"/><circle cx="898" cy="57" r="207" fill="url(#purp)"/><line x1="569" y1="111" x2="596" y2="102" stroke="#2b2f8c" stroke-width="2.6" stroke-linecap="round"/><line x1="602" y1="189" x2="770" y2="100" stroke="#2d3294" stroke-width="3.3" stroke-linecap="round"/><line x1="690" y1="143" x2="794" y2="89" stroke="#2a55b8" stroke-width="3.4" stroke-linecap="round" opacity="0.95"/><path d="M584.6 156.5L716.2 103.6L711.8 92.4L580.0 144.7A6.3 6.3 0 0 0 584.6 156.5Z" fill="url(#cy1)"/><path d="M621.0 220.6L800.7 105.1L799.3 102.9L619.0 217.4A1.9 1.9 0 0 0 621.0 220.6Z" fill="url(#lb1)"/><path d="M660.9 248.4L803.7 139.9L796.3 129.7L649.1 232.2A10.0 10.0 0 0 0 660.9 248.4Z" fill="#cde1ee"/><line x1="712" y1="234.8" x2="786" y2="172.5" stroke="#d2e0f4" stroke-width="3.6" stroke-linecap="round"/><line x1="752" y1="234.5" x2="800" y2="190.5" stroke="#2a58b8" stroke-width="3.4" stroke-linecap="round"/><path d="M652.5 379.3L708.6 323.0L705.4 319.8L650.3 377.3A1.5 1.5 0 0 0 652.5 379.3Z" fill="#6ab2e2"/><path d="M713.1 353.2L741.1 324.5L730.9 315.5L705.9 346.8A4.8 4.8 0 0 0 713.1 353.2Z" fill="#fbf6e0"/><line x1="786.2" y1="386" x2="798" y2="369.5" stroke="#2e3a9c" stroke-width="3" stroke-linecap="round"/><line x1="343.3" y1="627.5" x2="237.7" y2="605.1" stroke="#27358a" stroke-width="2.6" stroke-linecap="round" opacity="0.75"/><line x1="344.9" y1="621.7" x2="206.8" y2="577.4" stroke="#27358a" stroke-width="2.6" stroke-linecap="round" opacity="0.75"/><line x1="347.0" y1="616.0" x2="216.8" y2="559.3" stroke="#27358a" stroke-width="2.6" stroke-linecap="round" opacity="0.75"/><line x1="349.7" y1="610.6" x2="228.5" y2="542.5" stroke="#27358a" stroke-width="2.6" stroke-linecap="round" opacity="0.75"/><line x1="352.9" y1="605.5" x2="241.7" y2="527.3" stroke="#27358a" stroke-width="2.6" stroke-linecap="round" opacity="0.75"/><line x1="356.6" y1="600.7" x2="256.1" y2="513.7" stroke="#27358a" stroke-width="2.6" stroke-linecap="round" opacity="0.75"/><line x1="360.8" y1="596.4" x2="271.6" y2="501.8" stroke="#27358a" stroke-width="2.6" stroke-linecap="round" opacity="0.75"/><line x1="365.4" y1="592.4" x2="288.0" y2="491.8" stroke="#27358a" stroke-width="2.6" stroke-linecap="round" opacity="0.75"/><line x1="370.4" y1="589.0" x2="305.1" y2="483.6" stroke="#27358a" stroke-width="2.6" stroke-linecap="round" opacity="0.75"/><line x1="375.7" y1="586.1" x2="322.7" y2="477.3" stroke="#27358a" stroke-width="2.6" stroke-linecap="round" opacity="0.75"/><line x1="381.3" y1="583.7" x2="340.5" y2="473.0" stroke="#27358a" stroke-width="2.6" stroke-linecap="round" opacity="0.75"/><line x1="387.0" y1="581.9" x2="358.3" y2="470.5" stroke="#27358a" stroke-width="2.6" stroke-linecap="round" opacity="0.75"/><line x1="393.0" y1="580.7" x2="376.1" y2="470.0" stroke="#27358a" stroke-width="2.6" stroke-linecap="round" opacity="0.75"/><line x1="399.0" y1="580.1" x2="393.5" y2="471.2" stroke="#27358a" stroke-width="2.6" stroke-linecap="round" opacity="0.75"/><line x1="405.0" y1="580.1" x2="412.4" y2="434.3" stroke="#27358a" stroke-width="2.6" stroke-linecap="round" opacity="0.75"/><line x1="411.0" y1="580.7" x2="432.6" y2="439.3" stroke="#27358a" stroke-width="2.6" stroke-linecap="round" opacity="0.75"/><line x1="417.0" y1="581.9" x2="451.9" y2="446.3" stroke="#27358a" stroke-width="2.6" stroke-linecap="round" opacity="0.75"/><line x1="422.7" y1="583.7" x2="470.1" y2="455.1" stroke="#27358a" stroke-width="2.6" stroke-linecap="round" opacity="0.75"/><line x1="428.3" y1="586.1" x2="487.0" y2="465.6" stroke="#27358a" stroke-width="2.6" stroke-linecap="round" opacity="0.75"/><line x1="433.6" y1="589.0" x2="502.6" y2="477.6" stroke="#27358a" stroke-width="2.6" stroke-linecap="round" opacity="0.75"/><line x1="438.6" y1="592.4" x2="516.6" y2="491.0" stroke="#27358a" stroke-width="2.6" stroke-linecap="round" opacity="0.75"/><line x1="443.2" y1="596.4" x2="529.0" y2="505.4" stroke="#27358a" stroke-width="2.6" stroke-linecap="round" opacity="0.75"/><line x1="447.4" y1="600.7" x2="539.6" y2="520.9" stroke="#27358a" stroke-width="2.6" stroke-linecap="round" opacity="0.75"/><line x1="451.1" y1="605.5" x2="548.4" y2="537.0" stroke="#27358a" stroke-width="2.6" stroke-linecap="round" opacity="0.75"/><line x1="454.3" y1="610.6" x2="555.4" y2="553.8" stroke="#27358a" stroke-width="2.6" stroke-linecap="round" opacity="0.75"/><line x1="457.0" y1="616.0" x2="560.6" y2="570.9" stroke="#27358a" stroke-width="2.6" stroke-linecap="round" opacity="0.75"/><line x1="459.1" y1="621.7" x2="563.9" y2="588.1" stroke="#27358a" stroke-width="2.6" stroke-linecap="round" opacity="0.75"/><line x1="460.7" y1="627.5" x2="604.5" y2="597.0" stroke="#27358a" stroke-width="2.6" stroke-linecap="round" opacity="0.75"/><circle cx="402" cy="607" r="119" fill="url(#blu)"/><circle cx="402" cy="640" r="165" fill="#22348c" opacity=".28"/><line x1="272.2" y1="455.8" x2="355" y2="592" stroke="#b6d6f6" stroke-width="1.8" stroke-linecap="round" opacity="0.95"/><line x1="294" y1="477.5" x2="365.5" y2="592" stroke="#b6d6f6" stroke-width="1.8" stroke-linecap="round" opacity="0.95"/><line x1="317" y1="463.5" x2="373" y2="592" stroke="#b6d6f6" stroke-width="1.8" stroke-linecap="round" opacity="0.95"/><line x1="355.3" y1="449.4" x2="386" y2="592" stroke="#b6d6f6" stroke-width="1.8" stroke-linecap="round" opacity="0.95"/><line x1="366.5" y1="416.6" x2="397" y2="592" stroke="#b6d6f6" stroke-width="1.8" stroke-linecap="round" opacity="0.95"/><line x1="405" y1="444" x2="406.5" y2="592" stroke="#b6d6f6" stroke-width="1.8" stroke-linecap="round" opacity="0.95"/><line x1="415.4" y1="444" x2="413" y2="592" stroke="#b6d6f6" stroke-width="1.8" stroke-linecap="round" opacity="0.95"/><line x1="268.4" y1="495.4" x2="350" y2="592" stroke="#b6d6f6" stroke-width="1.8" stroke-linecap="round" opacity="0.95"/><line x1="242.4" y1="524.2" x2="330" y2="587" stroke="#b6d6f6" stroke-width="1.8" stroke-linecap="round" opacity="0.95"/><line x1="233.6" y1="536.7" x2="317" y2="589" stroke="#b6d6f6" stroke-width="1.8" stroke-linecap="round" opacity="0.95"/><line x1="478" y1="425" x2="433" y2="592" stroke="#b6d6f6" stroke-width="1.8" stroke-linecap="round" opacity="0.95"/><line x1="514.7" y1="478" x2="444" y2="592" stroke="#b6d6f6" stroke-width="1.8" stroke-linecap="round" opacity="0.95"/><line x1="549.7" y1="506.6" x2="463" y2="592" stroke="#b6d6f6" stroke-width="1.8" stroke-linecap="round" opacity="0.95"/><line x1="566" y1="530" x2="480" y2="592" stroke="#b6d6f6" stroke-width="1.8" stroke-linecap="round" opacity="0.95"/><line x1="439.7" y1="446.7" x2="421.5" y2="592" stroke="#b6d6f6" stroke-width="1.8" stroke-linecap="round" opacity="0.95"/><line x1="462" y1="500" x2="428" y2="592" stroke="#b6d6f6" stroke-width="1.8" stroke-linecap="round" opacity="0.95"/><line x1="300" y1="500" x2="360" y2="592" stroke="#b6d6f6" stroke-width="1.8" stroke-linecap="round" opacity="0.95"/><line x1="330" y1="505" x2="380" y2="592" stroke="#b6d6f6" stroke-width="1.8" stroke-linecap="round" opacity="0.95"/><line x1="500" y1="520" x2="452" y2="592" stroke="#b6d6f6" stroke-width="1.8" stroke-linecap="round" opacity="0.95"/><line x1="540" y1="540" x2="470" y2="592" stroke="#b6d6f6" stroke-width="1.8" stroke-linecap="round" opacity="0.95"/><line x1="250" y1="545" x2="320" y2="592" stroke="#b6d6f6" stroke-width="1.8" stroke-linecap="round" opacity="0.95"/><line x1="344" y1="520" x2="372" y2="592" stroke="#b6d6f6" stroke-width="1.8" stroke-linecap="round" opacity="0.95"/><line x1="352" y1="535" x2="379" y2="592" stroke="#b6d6f6" stroke-width="1.8" stroke-linecap="round" opacity="0.95"/><line x1="362" y1="520" x2="384" y2="592" stroke="#b6d6f6" stroke-width="1.8" stroke-linecap="round" opacity="0.95"/><line x1="371" y1="540" x2="389" y2="592" stroke="#b6d6f6" stroke-width="1.8" stroke-linecap="round" opacity="0.95"/><line x1="385" y1="530" x2="393" y2="592" stroke="#b6d6f6" stroke-width="1.8" stroke-linecap="round" opacity="0.95"/><line x1="429" y1="520" x2="418" y2="592" stroke="#b6d6f6" stroke-width="1.8" stroke-linecap="round" opacity="0.95"/><line x1="444" y1="530" x2="424" y2="592" stroke="#b6d6f6" stroke-width="1.8" stroke-linecap="round" opacity="0.95"/><line x1="455" y1="525" x2="431" y2="592" stroke="#b6d6f6" stroke-width="1.8" stroke-linecap="round" opacity="0.95"/><line x1="466" y1="540" x2="436" y2="592" stroke="#b6d6f6" stroke-width="1.8" stroke-linecap="round" opacity="0.95"/><line x1="478" y1="535" x2="442" y2="592" stroke="#b6d6f6" stroke-width="1.8" stroke-linecap="round" opacity="0.95"/><line x1="300" y1="560" x2="338" y2="592" stroke="#b6d6f6" stroke-width="1.8" stroke-linecap="round" opacity="0.95"/><line x1="287" y1="565" x2="322" y2="592" stroke="#b6d6f6" stroke-width="1.8" stroke-linecap="round" opacity="0.95"/><line x1="505" y1="560" x2="466" y2="592" stroke="#b6d6f6" stroke-width="1.8" stroke-linecap="round" opacity="0.95"/><line x1="195.4" y1="543.3" x2="292" y2="590" stroke="#b6d6f6" stroke-width="1.8" stroke-linecap="round" opacity="0.95"/><line x1="211.6" y1="583.7" x2="236" y2="590" stroke="#b6d6f6" stroke-width="1.8" stroke-linecap="round" opacity="0.95"/><line x1="395" y1="475" x2="401" y2="592" stroke="#b6d6f6" stroke-width="1.8" stroke-linecap="round" opacity="0.95"/><line x1="423" y1="458" x2="410.5" y2="592" stroke="#b6d6f6" stroke-width="1.8" stroke-linecap="round" opacity="0.95"/><line x1="381" y1="482" x2="394" y2="592" stroke="#b6d6f6" stroke-width="1.8" stroke-linecap="round" opacity="0.95"/><line x1="449" y1="474" x2="419" y2="592" stroke="#b6d6f6" stroke-width="1.8" stroke-linecap="round" opacity="0.95"/><line x1="376" y1="500" x2="391" y2="592" stroke="#b6d6f6" stroke-width="1.8" stroke-linecap="round" opacity="0.95"/><line x1="436" y1="505" x2="416" y2="592" stroke="#b6d6f6" stroke-width="1.8" stroke-linecap="round" opacity="0.95"/><line x1="410" y1="500" x2="408" y2="592" stroke="#b6d6f6" stroke-width="1.8" stroke-linecap="round" opacity="0.95"/><path d="M234.3 558.2L298.7 594.2L301.3 589.8L238.7 550.8A4.2 4.2 0 0 0 234.3 558.2Z" fill="#c6ddf0"/><path d="M252.1 584.3L279.5 593.4L280.5 590.6L253.9 579.7A2.5 2.5 0 0 0 252.1 584.3Z" fill="#a8a044"/><defs><linearGradient id="gs1" gradientUnits="userSpaceOnUse" x1="254.3" y1="502" x2="349" y2="592"><stop offset="0.2" stop-color="#fffdf0"/><stop offset="0.6" stop-color="#f0e26c"/></linearGradient></defs><path d="M252.4 504.0L348.2 592.9L349.8 591.1L256.2 500.0A2.7 2.7 0 0 0 252.4 504.0Z" fill="url(#gs1)"/><defs><linearGradient id="gs2" gradientUnits="userSpaceOnUse" x1="282.4" y1="485.5" x2="364" y2="592"><stop offset="0.2" stop-color="#fffdf0"/><stop offset="0.6" stop-color="#f0e26c"/></linearGradient></defs><path d="M280.3 487.1L363.0 592.7L365.0 591.3L284.5 483.9A2.7 2.7 0 0 0 280.3 487.1Z" fill="url(#gs2)"/><defs><linearGradient id="gs3" gradientUnits="userSpaceOnUse" x1="319.5" y1="493" x2="379" y2="592"><stop offset="0.15" stop-color="#fffdf0"/><stop offset="0.55" stop-color="#f0e26c"/></linearGradient></defs><path d="M318.0 493.9L378.1 592.5L379.9 591.5L321.0 492.1A1.8 1.8 0 0 0 318.0 493.9Z" fill="url(#gs3)"/><defs><linearGradient id="gs4" gradientUnits="userSpaceOnUse" x1="349" y1="465" x2="388" y2="592"><stop offset="0.22" stop-color="#b09a36"/><stop offset="0.5" stop-color="#ee8424"/></linearGradient></defs><path d="M345.5 466.1L386.6 592.4L389.4 591.6L352.5 463.9A3.7 3.7 0 0 0 345.5 466.1Z" fill="url(#gs4)"/><path d="M384.9 454.8L396.9 592.1L400.1 591.9L392.3 454.2A3.7 3.7 0 0 0 384.9 454.8Z" fill="#cfe4f3"/><defs><linearGradient id="gs5" gradientUnits="userSpaceOnUse" x1="432" y1="438" x2="414" y2="592"><stop offset="0.15" stop-color="#fffbe4"/><stop offset="0.5" stop-color="#f0e066"/></linearGradient></defs><path d="M429.4 437.7L412.9 591.9L415.1 592.1L434.6 438.3A2.6 2.6 0 0 0 429.4 437.7Z" fill="url(#gs5)"/><defs><linearGradient id="gs6" gradientUnits="userSpaceOnUse" x1="474.8" y1="470" x2="429" y2="592"><stop offset="0.2" stop-color="#b09a36"/><stop offset="0.5" stop-color="#ee8424"/></linearGradient></defs><path d="M471.7 468.8L427.6 591.5L430.4 592.5L477.9 471.2A3.3 3.3 0 0 0 471.7 468.8Z" fill="url(#gs6)"/><defs><linearGradient id="gs7" gradientUnits="userSpaceOnUse" x1="491.4" y1="486.6" x2="437" y2="592"><stop offset="0.2" stop-color="#b09a36"/><stop offset="0.5" stop-color="#ee8424"/></linearGradient></defs><path d="M488.5 485.1L435.7 591.3L438.3 592.7L494.3 488.1A3.3 3.3 0 0 0 488.5 485.1Z" fill="url(#gs7)"/><defs><linearGradient id="gs8" gradientUnits="userSpaceOnUse" x1="524.7" y1="483" x2="449" y2="592"><stop offset="0.15" stop-color="#fffdf0"/><stop offset="0.5" stop-color="#f0e066"/></linearGradient></defs><path d="M522.5 481.5L448.0 591.3L450.0 592.7L526.9 484.5A2.7 2.7 0 0 0 522.5 481.5Z" fill="url(#gs8)"/><path d="M519.3 568.1L494.7 590.5L497.3 593.5L522.7 571.9A2.5 2.5 0 0 0 519.3 568.1Z" fill="#ee8a2a"/><path d="M152.5 274.4C146.2 265.8 145.2 250.9 144.4 187.4C143.7 250.9 142.6 265.8 136.3 274.4Z" fill="#fff"/><path d="M136.3 274.4C142.6 283.2 143.7 298.4 144.4 363.4C145.2 298.4 146.2 283.2 152.5 274.4Z" fill="#fff"/><path d="M144.4 266.3C139.5 272.6 130.9 273.6 94.4 274.4C130.9 275.1 139.5 276.2 144.4 282.5Z" fill="#fff"/><path d="M144.4 282.5C151.0 276.2 162.5 275.1 211.4 274.4C162.5 273.6 151.0 272.6 144.4 266.3Z" fill="#fff"/><path d="M148.7 278.0C150.2 273.2 153.1 265.2 157.9 258.3C151.9 264.3 144.5 268.5 140.1 270.8Z" fill="#fff"/><path d="M140.1 278.0C144.5 280.3 151.9 284.5 157.9 290.5C153.1 283.6 150.2 275.6 148.7 270.8Z" fill="#fff"/><path d="M140.1 270.8C138.6 275.6 135.7 283.6 130.9 290.5C136.9 284.5 144.3 280.3 148.7 278.0Z" fill="#fff"/><path d="M148.7 270.8C144.3 268.5 136.9 264.3 130.9 258.3C135.7 265.2 138.6 273.2 140.1 278.0Z" fill="#fff"/><circle cx="144.4" cy="274.4" r="7.7" fill="#fff"/><path d="M218.3 426.7C214.5 422.1 214.2 414.3 213.4 380.7C212.7 414.3 212.3 422.1 208.5 426.7Z" fill="#fff"/><path d="M208.5 426.7C212.3 431.2 212.7 438.8 213.4 471.7C214.2 438.8 214.5 431.2 218.3 426.7Z" fill="#fff"/><path d="M213.4 421.8C209.7 425.6 203.4 425.9 176.4 426.7C203.4 427.4 209.7 427.8 213.4 431.6Z" fill="#fff"/><path d="M213.4 431.6C217.0 427.8 223.1 427.4 249.4 426.7C223.1 425.9 217.0 425.6 213.4 421.8Z" fill="#fff"/><path d="M216.0 428.9C216.7 426.3 218.2 422.1 220.5 418.3C217.1 421.2 213.2 423.4 210.8 424.5Z" fill="#fff"/><path d="M210.8 428.9C213.2 430.0 217.1 432.2 220.5 435.1C218.2 431.3 216.7 427.1 216.0 424.5Z" fill="#fff"/><path d="M210.8 424.5C210.1 427.1 208.6 431.3 206.3 435.1C209.7 432.2 213.6 430.0 216.0 428.9Z" fill="#fff"/><path d="M216.0 424.5C213.6 423.4 209.7 421.2 206.3 418.3C208.6 422.1 210.1 426.3 210.8 428.9Z" fill="#fff"/><circle cx="213.4" cy="426.7" r="4.7" fill="#fff"/><path d="M186.2 549.5C182.4 545.0 182.1 537.4 181.3 504.5C180.6 537.4 180.2 545.0 176.4 549.5Z" fill="#fff"/><path d="M176.4 549.5C180.2 553.7 180.6 560.8 181.3 591.5C182.1 560.8 182.4 553.7 186.2 549.5Z" fill="#fff"/><path d="M181.3 544.5C177.8 548.4 171.9 548.8 146.3 549.5C171.9 550.2 177.8 550.6 181.3 554.5Z" fill="#fff"/><path d="M181.3 554.5C185.0 550.6 191.3 550.2 218.3 549.5C191.3 548.8 185.0 548.4 181.3 544.5Z" fill="#fff"/><path d="M183.9 551.7C184.6 549.1 186.1 544.9 188.4 541.1C185.0 544.0 181.1 546.2 178.7 547.3Z" fill="#fff"/><path d="M178.7 551.7C181.1 552.8 185.0 555.0 188.4 557.9C186.1 554.1 184.6 549.9 183.9 547.3Z" fill="#fff"/><path d="M178.7 547.3C178.0 549.9 176.5 554.1 174.2 557.9C177.6 555.0 181.5 552.8 183.9 551.7Z" fill="#fff"/><path d="M183.9 547.3C181.5 546.2 177.6 544.0 174.2 541.1C176.5 544.9 178.0 549.1 178.7 551.7Z" fill="#fff"/><circle cx="181.3" cy="549.5" r="4.7" fill="#fff"/><path d="M624.7 528.5C620.8 526.3 620.5 522.6 619.7 506.5C619.0 522.6 618.6 526.3 614.8 528.5Z" fill="#fff"/><path d="M614.8 528.5C618.6 529.9 619.0 532.3 619.7 542.5C620.5 532.3 620.8 529.9 624.7 528.5Z" fill="#fff"/><path d="M619.7 523.5C616.2 527.4 610.2 527.8 584.7 528.5C610.2 529.2 616.2 529.6 619.7 533.5Z" fill="#fff"/><path d="M619.7 533.5C623.3 529.6 629.4 529.2 655.7 528.5C629.4 527.8 623.3 527.4 619.7 523.5Z" fill="#fff"/><path d="M622.3 530.7C622.7 528.4 623.7 524.8 625.5 521.6C622.6 523.9 619.2 525.5 617.1 526.3Z" fill="#fff"/><path d="M617.1 530.7C619.2 531.5 622.6 533.1 625.5 535.4C623.7 532.2 622.7 528.6 622.3 526.3Z" fill="#fff"/><path d="M617.1 526.3C616.7 528.6 615.7 532.2 613.9 535.4C616.8 533.1 620.2 531.5 622.3 530.7Z" fill="#fff"/><path d="M622.3 526.3C620.2 525.5 616.8 523.9 613.9 521.6C615.7 524.8 616.7 528.4 617.1 530.7Z" fill="#fff"/><circle cx="619.7" cy="528.5" r="4.7" fill="#fff"/><path d="M100.6 340.0C97.8 339.1 97.8 337.6 97.0 331.0C96.2 337.6 96.2 339.1 93.4 340.0Z" fill="#fff"/><path d="M93.4 340.0C96.2 340.9 96.2 342.4 97.0 349.0C97.8 342.4 97.8 340.9 100.6 340.0Z" fill="#fff"/><path d="M97.0 336.4C96.2 339.2 94.8 339.2 89.0 340.0C94.8 340.8 96.2 340.8 97.0 343.6Z" fill="#fff"/><path d="M97.0 343.6C97.9 340.8 99.4 340.8 106.0 340.0C99.4 339.2 97.9 339.2 97.0 336.4Z" fill="#fff"/><path d="M98.9 341.6C99.2 339.9 100.3 337.3 101.5 334.6C99.1 336.3 96.7 337.8 95.1 338.4Z" fill="#fff"/><path d="M95.1 341.6C96.7 342.2 99.1 343.7 101.5 345.4C100.3 342.7 99.2 340.1 98.9 338.4Z" fill="#fff"/><path d="M95.1 338.4C94.8 340.1 93.7 342.7 92.5 345.4C94.9 343.7 97.3 342.2 98.9 341.6Z" fill="#fff"/><path d="M98.9 338.4C97.3 337.8 94.9 336.3 92.5 334.6C93.7 337.3 94.8 339.9 95.1 341.6Z" fill="#fff"/><circle cx="97" cy="340" r="3.4" fill="#fff"/><path d="M795.4 176.3C790.8 173.6 790.2 169.0 789.5 149.3C788.8 169.0 788.2 173.6 783.6 176.3Z" fill="#fff"/><path d="M783.6 176.3C788.2 180.3 788.8 187.1 789.5 216.3C790.2 187.1 790.8 180.3 795.4 176.3Z" fill="#fff"/><path d="M789.5 170.5C786.1 175.0 780.3 175.6 755.5 176.3C780.3 177.1 786.1 177.6 789.5 182.2Z" fill="#fff"/><path d="M789.5 182.2C790.5 177.6 792.2 177.1 799.5 176.3C792.2 175.6 790.5 175.0 789.5 170.5Z" fill="#fff"/><path d="M792.6 178.9C793.1 176.2 794.3 171.7 796.6 167.9C793.2 170.8 789.0 172.7 786.4 173.7Z" fill="#fff"/><path d="M786.4 178.9C789.0 179.9 793.2 181.8 796.6 184.7C794.3 180.9 793.1 176.4 792.6 173.7Z" fill="#fff"/><path d="M786.4 173.7C785.9 176.4 784.7 180.9 782.4 184.7C785.8 181.8 790.0 179.9 792.6 178.9Z" fill="#fff"/><path d="M792.6 173.7C790.0 172.7 785.8 170.8 782.4 167.9C784.7 171.7 785.9 176.2 786.4 178.9Z" fill="#fff"/><circle cx="789.5" cy="176.3" r="5.6" fill="#fff"/><path d="M320.2 546.6C316.7 544.8 316.4 541.7 315.7 528.6C314.9 541.7 314.7 544.8 311.2 546.6Z" fill="#fff"/><path d="M311.2 546.6C314.7 550.6 314.9 557.4 315.7 586.6C316.4 557.4 316.7 550.6 320.2 546.6Z" fill="#fff"/><path d="M315.7 542.1C312.7 545.6 307.6 545.9 285.7 546.6C307.6 547.4 312.7 547.6 315.7 551.1Z" fill="#fff"/><path d="M315.7 551.1C317.9 547.6 321.6 547.4 337.7 546.6C321.6 545.9 317.9 545.6 315.7 542.1Z" fill="#fff"/><path d="M318.1 548.6C318.7 546.2 320.1 542.5 322.1 538.9C319.0 541.5 315.5 543.6 313.3 544.6Z" fill="#fff"/><path d="M313.3 548.6C315.5 549.6 319.0 551.7 322.1 554.3C320.1 550.7 318.7 547.0 318.1 544.6Z" fill="#fff"/><path d="M313.3 544.6C312.7 547.0 311.3 550.7 309.3 554.3C312.4 551.7 315.9 549.6 318.1 548.6Z" fill="#fff"/><path d="M318.1 544.6C315.9 543.6 312.4 541.5 309.3 538.9C311.3 542.5 312.7 546.2 313.3 548.6Z" fill="#fff"/><circle cx="315.7" cy="546.6" r="4.3" fill="#fff"/><path d="M366.2 526.0C362.7 524.2 362.4 521.1 361.7 508.0C360.9 521.1 360.7 524.2 357.2 526.0Z" fill="#fff"/><path d="M357.2 526.0C360.7 528.2 360.9 531.9 361.7 548.0C362.4 531.9 362.7 528.2 366.2 526.0Z" fill="#fff"/><path d="M361.7 521.5C359.3 525.0 355.2 525.2 337.7 526.0C355.2 526.8 359.3 527.0 361.7 530.5Z" fill="#fff"/><path d="M361.7 530.5C365.1 527.0 370.9 526.8 395.7 526.0C370.9 525.2 365.1 525.0 361.7 521.5Z" fill="#fff"/><path d="M364.1 528.0C364.7 525.6 366.1 521.9 368.1 518.3C365.0 520.9 361.5 523.0 359.3 524.0Z" fill="#fff"/><path d="M359.3 528.0C361.5 529.0 365.0 531.1 368.1 533.7C366.1 530.1 364.7 526.4 364.1 524.0Z" fill="#fff"/><path d="M359.3 524.0C358.7 526.4 357.3 530.1 355.3 533.7C358.4 531.1 361.9 529.0 364.1 528.0Z" fill="#fff"/><path d="M364.1 524.0C361.9 523.0 358.4 520.9 355.3 518.3C357.3 521.9 358.7 525.6 359.3 528.0Z" fill="#fff"/><circle cx="361.7" cy="526" r="4.3" fill="#fff"/><path d="M497.5 548.0C494.0 546.2 493.8 543.1 493.0 530.0C492.2 543.1 492.0 546.2 488.5 548.0Z" fill="#fff"/><path d="M488.5 548.0C492.0 551.8 492.2 558.3 493.0 586.0C493.8 558.3 494.0 551.8 497.5 548.0Z" fill="#fff"/><path d="M493.0 543.5C490.4 547.0 486.0 547.2 467.0 548.0C486.0 548.8 490.4 549.0 493.0 552.5Z" fill="#fff"/><path d="M493.0 552.5C495.0 549.0 498.4 548.8 513.0 548.0C498.4 547.2 495.0 547.0 493.0 543.5Z" fill="#fff"/><path d="M495.4 550.0C496.0 547.6 497.4 543.9 499.4 540.3C496.3 542.9 492.8 545.0 490.6 546.0Z" fill="#fff"/><path d="M490.6 550.0C492.8 551.0 496.3 553.1 499.4 555.7C497.4 552.1 496.0 548.4 495.4 546.0Z" fill="#fff"/><path d="M490.6 546.0C490.0 548.4 488.6 552.1 486.6 555.7C489.7 553.1 493.2 551.0 495.4 550.0Z" fill="#fff"/><path d="M495.4 546.0C493.2 545.0 489.7 542.9 486.6 540.3C488.6 543.9 490.0 547.6 490.6 550.0Z" fill="#fff"/><circle cx="493" cy="548" r="4.3" fill="#fff"/><path d="M450.9 186.5C456.7 176.3 468.4 160.7 497.0 138.6C467.6 159.5 449.2 166.2 437.7 168.9Z" fill="#7aa7e2"/><path d="M453.1 171.1C443.3 165.9 428.4 155.3 407.6 129.0C427.2 156.2 433.2 173.4 435.5 184.3Z" fill="#7aa7e2"/><path d="M437.8 168.8C431.7 179.1 419.7 194.8 390.7 217.1C420.6 196.0 439.2 189.3 450.8 186.6Z" fill="#7aa7e2"/><path d="M435.5 184.3C445.4 189.6 460.3 200.2 481.3 226.7C461.5 199.3 455.4 182.0 453.1 171.1Z" fill="#7aa7e2"/><path d="M453.6 182.6C454.7 170.9 458.9 151.8 475.3 119.4C457.6 151.1 444.1 165.3 435.0 172.8Z" fill="#e4eefa"/><path d="M449.2 168.4C438.3 167.7 420.6 164.2 390.8 149.3C419.9 165.6 432.7 178.3 439.4 187.0Z" fill="#e4eefa"/><path d="M435.1 172.6C433.6 184.7 428.7 204.3 411.1 237.5C430.0 205.0 444.1 190.5 453.5 182.8Z" fill="#e4eefa"/><path d="M439.5 187.0C450.2 187.5 467.6 190.6 496.9 205.0C468.3 189.3 455.8 176.9 449.1 168.4Z" fill="#e4eefa"/><path d="M455.3 177.7C450.6 165.7 445.1 144.8 444.3 104.7C443.6 144.8 438.0 165.7 433.3 177.7Z" fill="#ffffff"/><path d="M433.3 177.7C438.0 191.0 443.6 213.9 444.3 258.1C445.1 213.9 450.6 191.0 455.3 177.7Z" fill="#ffffff"/><path d="M444.3 166.7C434.5 171.4 417.5 176.9 384.7 177.7C417.5 178.4 434.5 184.0 444.3 188.7Z" fill="#ffffff"/><path d="M444.3 188.7C454.0 184.0 470.7 178.4 503.0 177.7C470.7 176.9 454.0 171.4 444.3 166.7Z" fill="#ffffff"/><circle cx="444.3" cy="177.7" r="16" fill="#fff"/><circle cx="444.3" cy="177.7" r="19" fill="#fff" opacity=".5"/></svg><svg style="left:118px;top:55.0px" width="9" height="15" viewBox="0 0 9 15"><path d="M1 1V12L3.8 9.5L6 14L7.6 13.2L5.6 8.8H9Z" fill="#111" stroke="#fff" stroke-width="1"/></svg><div style="left:762.5px;top:48.8px;width:171px;height:512px;background:#d6d6d6;border-left:1.5px solid #8a8a8a"></div><div class="ph" style="left:763.5px;top:48.8px;width:170px;height:8.7px;"></div><svg style="left:921.5px;top:50.8px" width="7" height="5" viewBox="0 0 7 5"><path d="M0 0V5L3 2.5ZM4 0V5L7 2.5Z" fill="#333"/></svg><div class="tabrow" style="left:763.5px;top:57.5px;width:170px;height:13px;"></div><svg style="left:920.5px;top:61.5px" width="10" height="6" viewBox="0 0 10 6"><path d="M0 1.5L2.5 3L0 4.5Z" fill="#333"/><path d="M4 .8H9.5M4 3H9.5M4 5.2H9.5" stroke="#777" stroke-width="1.3"/></svg><div style="left:765px;top:57.5px;width:49px;height:13.5px;background:#d6d6d6;border-left:1px solid #e8e8e8;border-right:1px solid #888"></div><svg style="left:768px;top:61.0px" width="4" height="7" viewBox="0 0 4 7"><path d="M2 .6L3.5 2.6H.5ZM2 6.4L3.5 4.4H.5Z" fill="none" stroke="#333" stroke-width=".8"/></svg><span class="t" style="left:773.5px;top:59.8px;font-size:9.2px;color:#111;letter-spacing:-.3px">颜色参考</span><div style="left:769px;top:76.0px;width:15.5px;height:15.5px;background:#fff;border:1px solid #666;box-shadow:inset 0 0 0 2px #ddd"></div><div class="in" style="left:789px;top:76.0px;width:129px;height:16px;"></div><div style="left:791.0px;top:77.5px;width:12px;height:13px;background:#b78c5c"></div><div style="left:802.8px;top:77.5px;width:12px;height:13px;background:#6b491d"></div><div style="left:814.6px;top:77.5px;width:12px;height:13px;background:#3c6a34"></div><div style="left:826.4px;top:77.5px;width:12px;height:13px;background:#6b8fc9"></div><div style="left:838.2px;top:77.5px;width:12px;height:13px;background:#d79bd8"></div><div style="left:790.5px;top:77.0px;width:13px;height:14px;border:1px solid #444"></div><div style="left:917px;top:76.0px;width:11.5px;height:16px;background:#fff;border:1px solid #777"></div><div style="left:917.5px;top:76.0px;width:11px;height:16px;background:linear-gradient(#f6f6f6,#d2d2d2);border:1px solid #777"></div><svg style="left:920.0px;top:82.0px" width="6" height="4" viewBox="0 0 6 4"><path d="M0 0H6L3 4Z" fill="#111"/></svg><span class="t" style="left:787px;top:97.0px;font-size:9.2px;color:#111;font-weight:bold">暗色</span><span class="t" style="left:891px;top:97.0px;font-size:9.2px;color:#111;font-weight:bold">淡色</span><svg style="left:847px;top:101.0px" width="4" height="3" viewBox="0 0 4 3"><path d="M0 0H4L2 3Z" fill="#333"/></svg><div style="left:768.5px;top:110.8px;width:160px;height:55.5px;background:#1c1c1c"></div><div style="left:769.0px;top:111.3px;width:15.700000000000001px;height:9.85px;background:#282626"></div><div style="left:785.8px;top:111.3px;width:15.700000000000001px;height:9.85px;background:#5a5650"></div><div style="left:802.6px;top:111.3px;width:15.700000000000001px;height:9.85px;background:#8a7a68"></div><div style="left:819.4px;top:111.3px;width:15.700000000000001px;height:9.85px;background:#b08a62"></div><div style="left:836.2px;top:111.3px;width:15.700000000000001px;height:9.85px;background:#b98a58"></div><div style="left:853.0px;top:111.3px;width:15.700000000000001px;height:9.85px;background:#c49868"></div><div style="left:869.8px;top:111.3px;width:15.700000000000001px;height:9.85px;background:#d0aa80"></div><div style="left:886.6px;top:111.3px;width:15.700000000000001px;height:9.85px;background:#dcc0a0"></div><div style="left:903.4px;top:111.3px;width:15.700000000000001px;height:9.85px;background:#ecdccc"></div><div style="left:920.2px;top:111.3px;width:7.6px;height:10.049999999999999px;background:#dedede"></div><div style="left:769.0px;top:122.2px;width:15.700000000000001px;height:9.85px;background:#262424"></div><div style="left:785.8px;top:122.2px;width:15.700000000000001px;height:9.85px;background:#464240"></div><div style="left:802.6px;top:122.2px;width:15.700000000000001px;height:9.85px;background:#5a4a36"></div><div style="left:819.4px;top:122.2px;width:15.700000000000001px;height:9.85px;background:#664a28"></div><div style="left:836.2px;top:122.2px;width:15.700000000000001px;height:9.85px;background:#6a4618"></div><div style="left:853.0px;top:122.2px;width:15.700000000000001px;height:9.85px;background:#7a5a30"></div><div style="left:869.8px;top:122.2px;width:15.700000000000001px;height:9.85px;background:#927850"></div><div style="left:886.6px;top:122.2px;width:15.700000000000001px;height:9.85px;background:#b8a080"></div><div style="left:903.4px;top:122.2px;width:15.700000000000001px;height:9.85px;background:#dcccb8"></div><div style="left:920.2px;top:122.2px;width:7.6px;height:10.049999999999999px;background:#dedede"></div><div style="left:769.0px;top:133.0px;width:15.700000000000001px;height:9.85px;background:#262626"></div><div style="left:785.8px;top:133.0px;width:15.700000000000001px;height:9.85px;background:#3a4038"></div><div style="left:802.6px;top:133.0px;width:15.700000000000001px;height:9.85px;background:#46583e"></div><div style="left:819.4px;top:133.0px;width:15.700000000000001px;height:9.85px;background:#3e6636"></div><div style="left:836.2px;top:133.0px;width:15.700000000000001px;height:9.85px;background:#2f6a2c"></div><div style="left:853.0px;top:133.0px;width:15.700000000000001px;height:9.85px;background:#4a7844"></div><div style="left:869.8px;top:133.0px;width:15.700000000000001px;height:9.85px;background:#7a9870"></div><div style="left:886.6px;top:133.0px;width:15.700000000000001px;height:9.85px;background:#a8b898"></div><div style="left:903.4px;top:133.0px;width:15.700000000000001px;height:9.85px;background:#d0d8c4"></div><div style="left:920.2px;top:133.0px;width:7.6px;height:10.049999999999999px;background:#dedede"></div><div style="left:769.0px;top:143.9px;width:15.700000000000001px;height:9.85px;background:#242424"></div><div style="left:785.8px;top:143.9px;width:15.700000000000001px;height:9.85px;background:#4a5260"></div><div style="left:802.6px;top:143.9px;width:15.700000000000001px;height:9.85px;background:#6a7a98"></div><div style="left:819.4px;top:143.9px;width:15.700000000000001px;height:9.85px;background:#6a86b8"></div><div style="left:836.2px;top:143.9px;width:15.700000000000001px;height:9.85px;background:#6690d0"></div><div style="left:853.0px;top:143.9px;width:15.700000000000001px;height:9.85px;background:#80a0d4"></div><div style="left:869.8px;top:143.9px;width:15.700000000000001px;height:9.85px;background:#a0b8e0"></div><div style="left:886.6px;top:143.9px;width:15.700000000000001px;height:9.85px;background:#c4d0ec"></div><div style="left:903.4px;top:143.9px;width:15.700000000000001px;height:9.85px;background:#e4e8f4"></div><div style="left:920.2px;top:143.9px;width:7.6px;height:10.049999999999999px;background:#dedede"></div><div style="left:769.0px;top:154.7px;width:15.700000000000001px;height:9.85px;background:#242224"></div><div style="left:785.8px;top:154.7px;width:15.700000000000001px;height:9.85px;background:#5a5460"></div><div style="left:802.6px;top:154.7px;width:15.700000000000001px;height:9.85px;background:#9a88a4"></div><div style="left:819.4px;top:154.7px;width:15.700000000000001px;height:9.85px;background:#c898c8"></div><div style="left:836.2px;top:154.7px;width:15.700000000000001px;height:9.85px;background:#d894d8"></div><div style="left:853.0px;top:154.7px;width:15.700000000000001px;height:9.85px;background:#dca8dc"></div><div style="left:869.8px;top:154.7px;width:15.700000000000001px;height:9.85px;background:#e4c0e4"></div><div style="left:886.6px;top:154.7px;width:15.700000000000001px;height:9.85px;background:#ecd8ec"></div><div style="left:903.4px;top:154.7px;width:15.700000000000001px;height:9.85px;background:#f4ecf4"></div><div style="left:920.2px;top:154.7px;width:7.6px;height:10.049999999999999px;background:#dedede"></div><svg style="left:772px;top:168.0px" width="11" height="9" viewBox="0 0 11 9"><path d="M.6 .6H8.4V8.4H.6ZM4.5 .6V8.4M.6 4.5H8.4" fill="none" stroke="#444" stroke-width="1"/><rect x="9.3" y="7" width="1.6" height="1.6" fill="#222"/></svg><span class="t" style="left:790px;top:167.5px;font-size:9.2px;color:#111;">无</span><svg style="left:884px;top:167.0px" width="10" height="10" viewBox="0 0 10 10"><circle cx="5" cy="5" r="4.3" fill="#555" stroke="#222" stroke-width=".8"/><circle cx="3.8" cy="3.8" r="1.8" fill="#aaa"/></svg><svg style="left:902px;top:168.0px" width="13" height="9" viewBox="0 0 13 9"><path d="M0 4.5L3 2V7Z" fill="#222"/><path d="M3 4.5H5" stroke="#222" stroke-width="1.4"/><rect x="5.5" y=".7" width="6.5" height="7.6" fill="none" stroke="#333" stroke-width="1.1"/><path d="M8 .7V8.3" stroke="#333" stroke-width="1"/></svg><svg style="left:922px;top:173.0px" width="8" height="8" viewBox="0 0 8 8"><path d="M8 0L0 8M8 3L3 8M8 6L6 8" stroke="#bbb" stroke-width="1"/></svg><div style="left:763.5px;top:180.5px;width:170px;height:1.5px;background:#8c8c8c"></div><div class="tabrow" style="left:763.5px;top:181.3px;width:170px;height:14px;"></div><svg style="left:920.5px;top:185.3px" width="10" height="6" viewBox="0 0 10 6"><path d="M0 1.5L2.5 3L0 4.5Z" fill="#333"/><path d="M4 .8H9.5M4 3H9.5M4 5.2H9.5" stroke="#777" stroke-width="1.3"/></svg><div style="left:767px;top:181.8px;width:27px;height:13.5px;background:linear-gradient(#a8a8a8,#b2b2b2);border-left:1px solid #e8e8e8;border-right:1px solid #888"></div><span class="t" style="left:770px;top:184.1px;font-size:9.2px;color:#333;letter-spacing:-.3px">色板</span><div style="left:794px;top:181.8px;width:26px;height:14px;background:#d6d6d6;border-left:1px solid #e8e8e8;border-right:1px solid #888"></div><span class="t" style="left:797px;top:184.1px;font-size:9.2px;color:#111;letter-spacing:-.3px">符号</span><div style="left:768.5px;top:199.3px;width:160px;height:72.5px;background:#d9d9d9;border:1px solid #8a8a8a"></div><div style="left:918.5px;top:200.3px;width:9px;height:70.5px;background:#c4c4c4;border:1px solid #9a9a9a"></div><svg style="left:921px;top:203.3px" width="5" height="4" viewBox="0 0 5 4"><path d="M2.5 0L5 4H0Z" fill="#999"/></svg><svg style="left:921px;top:263.3px" width="5" height="4" viewBox="0 0 5 4"><path d="M2.5 4L5 0H0Z" fill="#999"/></svg><div style="left:770px;top:200.8px;width:23.2px;height:23px;background:#fbfbfb"></div><div style="left:794px;top:200.8px;width:23.2px;height:23px;background:#fbfbfb"></div><div style="left:818px;top:200.8px;width:23.2px;height:23px;background:#fbfbfb"></div><div style="left:842px;top:200.8px;width:23.2px;height:23px;background:#fbfbfb"></div><div style="left:866px;top:200.8px;width:23.2px;height:23px;background:#fbfbfb"></div><div style="left:890px;top:200.8px;width:23.2px;height:23px;background:#fbfbfb"></div><svg style="left:0;top:-.7px" width="933" height="560" viewBox="43 40 933 560"><g transform="translate(813,241.5)"><path d="M3 20L9 12L12 15Z" fill="#6aa060"/><path d="M2.5 20.5L7 16" stroke="#d9a24a" stroke-width="1.2"/><path d="M7.5 15.5C9 10 14 5 20.5 3C19.5 9.5 14 14.5 9.5 17Z" fill="#d8342c"/><path d="M12.2 9.2L15.8 12.8L14.4 14L10.9 10.5Z" fill="#e8e8e8"/><path d="M16.5 4.8C18 4 19.5 3.3 20.5 3C20.3 4.2 19.8 5.6 19 7Z" fill="#7a1c18"/><path d="M8.5 11.5L5.5 12L8 14.5ZM12.5 16.5L12 19.5L10 17Z" fill="#b02a24"/></g><g transform="translate(837,241.5)"><path d="M3 19C6 12 12 6 21 5C20 12 13 17 6 17Z" fill="#7a5a2a"/><path d="M2 20L12 11" stroke="#3a2a14" stroke-width="1"/><path d="M8 15C12 13 16 10 19 7" stroke="#a8884a" stroke-width="1.4" fill="none"/></g><g transform="translate(861,241.5)"><path d="M3 10C7 7 11 9 14 8C17 7 19 8 21 9V14C19 13 17 12 14 13C11 14 7 12 3 15Z" fill="#f4f4f4" stroke="#444" stroke-width="1"/><path d="M3 10L1.5 12.5L3 15M21 9L22 11.5L21 14" fill="none" stroke="#444" stroke-width="1"/></g><g transform="translate(885,241.5)"><path d="M6 20C4 16 8 11 12 9L16 4L18 6L16 11C15 16 11 20 6 20Z" fill="#555"/><path d="M8 17C9 14 11 12 14 10M7 14C9 12 11 10 13 9" stroke="#ddd" stroke-width="1.1" fill="none"/><path d="M15 3L18 1.5L18.5 5Z" fill="#222"/></g><g transform="translate(909,241.5)"><path d="M11.5 2L14 6H9Z" fill="#e0382c"/><path d="M9 6H14L16 10H7Z" fill="#ee9a2a"/><path d="M7 10H16L18.5 14H4.5Z" fill="#3f9a46"/><path d="M4.5 14H18.5L21 17.5L11.5 21L2 17.5Z" fill="#2f6cc4"/><path d="M11.5 2L11.5 21L2 17.5Z" fill="#fff" opacity=".18"/></g><g transform="translate(933,241.5)"><path d="M11.3 2L16.6 9H13.8V20.5L11.3 18.6L8.8 20.5V9H6Z" fill="#3f6a48"/><path d="M11.3 4.4L14 8.4H12.4V16.5L11.3 15.8L10.2 16.5V8.4H8.6Z" fill="#5d8a62"/></g></svg><svg style="left:770px;top:274.3px" width="14" height="10" viewBox="0 0 14 10"><path d="M1 9V1H4V9M5 9V3H7.5C9 3 9.5 5 9.5 9" fill="none" stroke="#222" stroke-width="1.4"/><rect x="11" y="7.5" width="1.8" height="1.8" fill="#222"/></svg><svg style="left:824px;top:273.3px" width="112" height="11" viewBox="0 0 112 11"><g fill="none" stroke="#bcbcbc" stroke-width="1.2"><path d="M1 3V6H8M8 6L5.5 3.5M8 6L5.5 8.5"/><path d="M21 5.5L24 3H31L34 5.5L31 8H24Z"/><rect x="42" y="1.5" width="8" height="8"/><path d="M46 1.5V9.5"/><rect x="62" y="1.5" width="8" height="8"/><path d="M70 5L67 9.5"/><path d="M83 3.5H92M84.5 3.5V10H90.5V3.5M86 1.5H89"/></g></svg><svg style="left:922px;top:277.3px" width="8" height="8" viewBox="0 0 8 8"><path d="M8 0L0 8M8 3L3 8M8 6L6 8" stroke="#bbb" stroke-width="1"/></svg><div style="left:763.5px;top:285.3px;width:170px;height:1.5px;background:#8c8c8c"></div><div class="tabrow" style="left:763.5px;top:286.8px;width:170px;height:13px;"></div><svg style="left:920.5px;top:290.8px" width="10" height="6" viewBox="0 0 10 6"><path d="M0 1.5L2.5 3L0 4.5Z" fill="#333"/><path d="M4 .8H9.5M4 3H9.5M4 5.2H9.5" stroke="#777" stroke-width="1.3"/></svg><div style="left:765px;top:286.8px;width:32px;height:13.5px;background:#d6d6d6;border-left:1px solid #e8e8e8;border-right:1px solid #888"></div><svg style="left:768px;top:290.3px" width="4" height="7" viewBox="0 0 4 7"><path d="M2 .6L3.5 2.6H.5ZM2 6.4L3.5 4.4H.5Z" fill="none" stroke="#333" stroke-width=".8"/></svg><span class="t" style="left:773.5px;top:289.1px;font-size:9.2px;color:#111;letter-spacing:-.3px">描边</span><div style="left:763.5px;top:300.3px;width:170px;height:5px;background:#d6d6d6"></div><div style="left:751.6px;top:311.0px;width:8.5px;height:240px;background:#929292"></div><div style="left:751.8px;top:301.0px;width:10.4px;height:10px;background:#e8e8e8;border:1px solid #bbb"></div><div style="left:759.5px;top:306.0px;width:174px;height:254.5px;background:#d6d6d6;border-left:1.5px solid #8a8a8a"></div><div class="ph" style="left:760.5px;top:306.0px;width:173px;height:9px;"></div><svg style="left:919.5px;top:308.0px" width="7" height="5" viewBox="0 0 7 5"><path d="M3 0V5L0 2.5ZM7 0V5L4 2.5Z" fill="#333"/></svg><div class="tabrow" style="left:760.5px;top:315.0px;width:173px;height:13px;"></div><svg style="left:920.5px;top:319.0px" width="10" height="6" viewBox="0 0 10 6"><path d="M0 1.5L2.5 3L0 4.5Z" fill="#333"/><path d="M4 .8H9.5M4 3H9.5M4 5.2H9.5" stroke="#777" stroke-width="1.3"/></svg><div style="left:763px;top:315.0px;width:30px;height:13.5px;background:#d6d6d6;border-left:1px solid #e8e8e8;border-right:1px solid #888"></div><svg style="left:766px;top:318.5px" width="4" height="7" viewBox="0 0 4 7"><path d="M2 .6L3.5 2.6H.5ZM2 6.4L3.5 4.4H.5Z" fill="none" stroke="#333" stroke-width=".8"/></svg><span class="t" style="left:771.5px;top:317.3px;font-size:9.2px;color:#111;letter-spacing:-.3px">渐变</span><div style="left:765px;top:334.0px;width:22px;height:21.5px;background:linear-gradient(90deg,#f4f4f4,#3a3a3a);border:1px solid #555"></div><svg style="left:790px;top:343.0px" width="4" height="3" viewBox="0 0 4 3"><path d="M0 0H4L2 3Z" fill="#222"/></svg><span class="t" style="left:801px;top:336.0px;font-size:9.2px;color:#111;font-weight:bold">类型:</span><div style="left:824px;top:334.0px;width:112px;height:13px;background:linear-gradient(#fff,#ececec);border:1px solid #808080"></div><div style="left:922.5px;top:335.0px;width:1px;height:11px;background:#aaa"></div><svg style="left:926px;top:339.0px" width="6" height="4" viewBox="0 0 6 4"><path d="M0 0H6L3 4Z" fill="#111"/></svg><span class="t" style="left:802px;top:354.5px;font-size:9.2px;color:#b4b4b4;">描边:</span><div style="left:824.0px;top:352.0px;width:16.8px;height:14.5px;background:#e2e2e2;border:1px solid #a8a8a8"></div><svg style="left:827.0px;top:354.5px" width="11" height="10" viewBox="0 0 11 10"><path d="M2 9V2H9M4.5 9V4.5H9" fill="none" stroke="#b4b4b4" stroke-width="1.3"/></svg><div style="left:840.8px;top:352.0px;width:16.8px;height:14.5px;background:#e2e2e2;border:1px solid #a8a8a8"></div><svg style="left:843.8px;top:354.5px" width="11" height="10" viewBox="0 0 11 10"><path d="M2 9V2H9M4.5 9V4.5H9" fill="none" stroke="#b4b4b4" stroke-width="1.3"/></svg><div style="left:857.6px;top:352.0px;width:16.8px;height:14.5px;background:#e2e2e2;border:1px solid #a8a8a8"></div><svg style="left:860.6px;top:354.5px" width="11" height="10" viewBox="0 0 11 10"><path d="M2 9V2H9M4.5 9V4.5H9" fill="none" stroke="#b4b4b4" stroke-width="1.3"/></svg><div style="left:772.5px;top:367.5px;width:14px;height:14px;background:#111"></div><div style="left:776px;top:371.0px;width:7px;height:7px;background:#c8c8c8;border:1px solid #eee"></div><div style="left:765px;top:360.0px;width:14.5px;height:14.5px;background:#fff;border:1px solid #888"></div><svg style="left:770px;top:389.0px" width="12" height="11" viewBox="0 0 12 11"><path d="M1 3H8V1.5L11 3.5L8 5.5V4.5H1ZM11 7.5H4V6L1 8L4 10V9H11Z" fill="#b4b4b4"/></svg><svg style="left:810px;top:373.0px" width="10" height="9" viewBox="0 0 10 9"><path d="M.6 8.4H9.4L6.5 1.5Z" fill="none" stroke="#b0b0b0" stroke-width="1.1"/></svg><div style="left:824px;top:372.0px;width:50px;height:13.5px;background:#ececec;border:1px solid #a4a4a4"></div><div style="left:863px;top:372.0px;width:11px;height:13.5px;background:linear-gradient(#f6f6f6,#d2d2d2);border:1px solid #a4a4a4"></div><svg style="left:865.5px;top:376.75px" width="6" height="4" viewBox="0 0 6 4"><path d="M0 0H6L3 4Z" fill="#888"/></svg><svg style="left:809px;top:392.0px" width="12" height="11" viewBox="0 0 12 11"><circle cx="6.5" cy="5.5" r="3.6" fill="none" stroke="#b0b0b0" stroke-width="1.2"/><path d="M1 1V10H11" fill="none" stroke="#b4b4b4" stroke-width="1" stroke-dasharray="1.5 1.2"/></svg><div style="left:824px;top:391.0px;width:50px;height:13.5px;background:#ececec;border:1px solid #a4a4a4"></div><div style="left:863px;top:391.0px;width:11px;height:13.5px;background:linear-gradient(#f6f6f6,#d2d2d2);border:1px solid #a4a4a4"></div><svg style="left:865.5px;top:395.75px" width="6" height="4" viewBox="0 0 6 4"><path d="M0 0H6L3 4Z" fill="#888"/></svg><div style="left:768px;top:415.0px;width:147px;height:13.5px;background:linear-gradient(90deg,#fafafa 0,#c8c8c8 30%,#7a7a7a 62%,#1e1e1e 90%,#0c0c0c 100%);border:1px solid #9a9a9a"></div><svg style="left:923px;top:418.0px" width="8" height="9" viewBox="0 0 8 9"><path d="M.5 2H7.5M1.5 2V8.5H6.5V2M3 .6H5" fill="none" stroke="#bcbcbc" stroke-width="1.1"/></svg><span class="t" style="left:783px;top:450.5px;font-size:9.2px;color:#bdbdbd;letter-spacing:-.3px">不透明度:</span><div style="left:824px;top:449.0px;width:50px;height:13.5px;background:#ececec;border:1px solid #a4a4a4"></div><div style="left:863px;top:449.0px;width:11px;height:13.5px;background:linear-gradient(#f6f6f6,#d2d2d2);border:1px solid #a4a4a4"></div><svg style="left:865.5px;top:453.75px" width="6" height="4" viewBox="0 0 6 4"><path d="M0 0H6L3 4Z" fill="#888"/></svg><span class="t" style="left:801px;top:469.5px;font-size:9.2px;color:#bdbdbd;">位置:</span><div style="left:824px;top:468.0px;width:50px;height:13.5px;background:#ececec;border:1px solid #a4a4a4"></div><div style="left:863px;top:468.0px;width:11px;height:13.5px;background:linear-gradient(#f6f6f6,#d2d2d2);border:1px solid #a4a4a4"></div><svg style="left:865.5px;top:472.75px" width="6" height="4" viewBox="0 0 6 4"><path d="M0 0H6L3 4Z" fill="#888"/></svg><div style="left:760.5px;top:485.5px;width:173px;height:1px;background:#9a9a9a"></div><div style="left:760.5px;top:486.5px;width:173px;height:1px;background:#eee"></div><div style="left:843px;top:488.5px;width:15px;height:1.6px;background:#8a8a8a"></div><div style="left:760.5px;top:491.0px;width:173px;height:1px;background:#a8a8a8"></div><div style="left:764.5px;top:492.5px;width:164.5px;height:60px;background:#d8d8d8;border:1px solid #7c7c7c"></div><span class="t" style="left:766px;top:554.5px;font-size:9px;color:#111;">1 个图层</span><svg style="left:830px;top:555.5px" width="90" height="6" viewBox="0 0 90 6"><g fill="none" stroke="#999" stroke-width="1.1"><circle cx="4" cy="4" r="3"/><rect x="18" y="1" width="6" height="6"/><path d="M36 1H44V6M38 3L42 3"/><rect x="56" y="1" width="8" height="6"/><path d="M76 2H84"/></g></svg><div style="left:595px;top:186.0px;width:167.5px;height:98.4px;background:#d6d6d6;border:1px solid #8e8e8e;border-top:0"></div><div class="ph" style="left:595px;top:186.0px;width:167.5px;height:8.5px;"></div><svg style="left:741.5px;top:188.0px" width="7" height="5" viewBox="0 0 7 5"><path d="M3 0V5L0 2.5ZM7 0V5L4 2.5Z" fill="#333"/></svg><svg style="left:753.5px;top:187.8px" width="6" height="6" viewBox="0 0 6 6"><path d="M.5 .5L5 5M5 .5L.5 5" stroke="#333" stroke-width="1.2"/></svg><div class="tabrow" style="left:595.5px;top:194.5px;width:166.5px;height:12.5px;"></div><svg style="left:749.0px;top:198.5px" width="10" height="6" viewBox="0 0 10 6"><path d="M0 1.5L2.5 3L0 4.5Z" fill="#333"/><path d="M4 .8H9.5M4 3H9.5M4 5.2H9.5" stroke="#777" stroke-width="1.3"/></svg><div style="left:597px;top:194.5px;width:39px;height:13px;background:#d6d6d6;border-left:1px solid #e8e8e8;border-right:1px solid #888"></div><svg style="left:600px;top:198.0px" width="4" height="7" viewBox="0 0 4 7"><path d="M2 .6L3.5 2.6H.5ZM2 6.4L3.5 4.4H.5Z" fill="none" stroke="#333" stroke-width=".8"/></svg><span class="t" style="left:605.5px;top:196.8px;font-size:9.2px;color:#111;letter-spacing:-.3px">透明度</span><div style="left:600px;top:211.5px;width:63px;height:14.5px;background:linear-gradient(#fafafa,#dedede);border:1px solid #777"></div><span class="t" style="left:606px;top:214.0px;font-size:9.2px;color:#111;">正常</span><div style="left:649.5px;top:213.0px;width:1px;height:11.5px;background:#aaa"></div><svg style="left:653px;top:217.0px" width="6" height="4" viewBox="0 0 6 4"><path d="M0 0H6L3 4Z" fill="#111"/></svg><span class="t" style="left:674px;top:214.0px;font-size:9.2px;color:#111;letter-spacing:-.3px">不透明度:</span><div style="left:714px;top:211.5px;width:45.5px;height:14.5px;background:#fff;border:1px solid #777"></div><div style="left:748.5px;top:211.5px;width:11px;height:14.5px;background:linear-gradient(#f6f6f6,#d2d2d2);border:1px solid #777"></div><svg style="left:751.0px;top:216.75px" width="6" height="4" viewBox="0 0 6 4"><path d="M0 0H6L3 4Z" fill="#111"/></svg><span class="m" style="left:717px;top:214.1px;font-size:9px;color:#111;letter-spacing:-.5px">100%</span><div style="left:599px;top:231.0px;width:159px;height:1px;background:#b4b4b4;border-bottom:1px solid #eaeaea;height:2px"></div><div style="left:600px;top:237.5px;width:97px;height:40px;background:#dadada;border:1.5px solid #8e8e8e"></div><div style="left:701px;top:236.0px;width:51px;height:14.5px;background:#dcdcdc;border:1px solid #b0b0b0;border-radius:2px"></div><span class="t" style="left:710px;top:239.0px;font-size:8.8px;color:#bebebe;letter-spacing:-.3px">制作蒙版</span><div style="left:701px;top:256.0px;width:8px;height:8px;background:#e0e0e0;border:1px solid #b4b4b4"></div><span class="t" style="left:713px;top:256.0px;font-size:8.8px;color:#bcbcbc;">剪切</span><div style="left:701px;top:271.0px;width:8px;height:8px;background:#e0e0e0;border:1px solid #b4b4b4"></div><span class="t" style="left:713px;top:271.0px;font-size:8.8px;color:#bcbcbc;letter-spacing:-.3px">反相蒙版</span><div style="left:520.5px;top:379.5px;width:168.5px;height:97px;background:#d6d6d6;border:1px solid #8e8e8e;border-top:0"></div><div class="ph" style="left:520.5px;top:379.5px;width:168.5px;height:8.5px;"></div><svg style="left:668.0px;top:381.5px" width="7" height="5" viewBox="0 0 7 5"><path d="M3 0V5L0 2.5ZM7 0V5L4 2.5Z" fill="#333"/></svg><svg style="left:680.0px;top:381.3px" width="6" height="6" viewBox="0 0 6 6"><path d="M.5 .5L5 5M5 .5L.5 5" stroke="#333" stroke-width="1.2"/></svg><div class="tabrow" style="left:521px;top:388.0px;width:167.5px;height:13px;"></div><svg style="left:675.5px;top:392.0px" width="10" height="6" viewBox="0 0 10 6"><path d="M0 1.5L2.5 3L0 4.5Z" fill="#333"/><path d="M4 .8H9.5M4 3H9.5M4 5.2H9.5" stroke="#777" stroke-width="1.3"/></svg><div style="left:523px;top:388.5px;width:26px;height:12.5px;background:linear-gradient(#a8a8a8,#b2b2b2);border-left:1px solid #e8e8e8;border-right:1px solid #888"></div><span class="t" style="left:526px;top:390.8px;font-size:9.2px;color:#333;letter-spacing:-.3px">对齐</span><div style="left:549px;top:388.0px;width:54px;height:13.5px;background:#d6d6d6;border-left:1px solid #e8e8e8;border-right:1px solid #888"></div><span class="t" style="left:552px;top:390.3px;font-size:9.2px;color:#111;letter-spacing:-.3px">路径查找器</span><span class="t" style="left:525px;top:406.0px;font-size:9.2px;color:#111;font-weight:bold;letter-spacing:-.3px">形状模式:</span><svg style="left:529.5px;top:420.0px" width="12" height="12" viewBox="0 0 12 12"><rect x="1" y="1" width="6.5" height="6.5" fill="#ddd" stroke="#222" stroke-width="1"/><rect x="4" y="4" width="6.5" height="6.5" fill="#ddd" stroke="#222" stroke-width="1"/></svg><svg style="left:554px;top:420.0px" width="12" height="12" viewBox="0 0 12 12"><rect x="4" y="4" width="6.5" height="6.5" fill="none" stroke="#222" stroke-width="1"/><rect x="1" y="1" width="6.5" height="6.5" fill="#eee" stroke="#222" stroke-width="1"/></svg><svg style="left:580px;top:420.0px" width="12" height="12" viewBox="0 0 12 12"><rect x="1" y="1" width="6.5" height="6.5" fill="none" stroke="#777" stroke-width="1"/><rect x="4" y="4" width="6.5" height="6.5" fill="none" stroke="#777" stroke-width="1"/><rect x="4" y="4" width="3.5" height="3.5" fill="#bbb" stroke="#444" stroke-width=".8"/></svg><svg style="left:606px;top:420.0px" width="12" height="12" viewBox="0 0 12 12"><rect x="1" y="1" width="6.5" height="6.5" fill="#ccc" stroke="#222" stroke-width="1"/><rect x="4" y="4" width="6.5" height="6.5" fill="#ccc" stroke="#222" stroke-width="1"/><rect x="4" y="4" width="3.5" height="3.5" fill="#eee"/></svg><div style="left:629px;top:421.0px;width:55.5px;height:14.5px;background:#dedede;border:1px solid #b0b0b0;border-radius:2px"></div><span class="t" style="left:648px;top:424.0px;font-size:8.8px;color:#c0c0c0;">扩展</span><span class="t" style="left:525px;top:441.0px;font-size:9.2px;color:#111;font-weight:bold;letter-spacing:-.3px">路径查找器:</span><svg style="left:531px;top:456.0px" width="12" height="12" viewBox="0 0 12 12"><rect x="1" y="1" width="6.5" height="6.5" fill="#999" stroke="#222" stroke-width="1"/><rect x="4" y="4" width="6.5" height="6.5" fill="#bbb" stroke="#222" stroke-width="1"/><path d="M4 7.5H7.5V4" stroke="#222" fill="none"/></svg><svg style="left:558px;top:456.0px" width="12" height="12" viewBox="0 0 12 12"><rect x="4" y="4" width="6.5" height="6.5" fill="#333" stroke="#222" stroke-width="1"/><rect x="1" y="1" width="6.5" height="6.5" fill="#555" stroke="#222" stroke-width="1"/></svg><svg style="left:585px;top:456.0px" width="12" height="12" viewBox="0 0 12 12"><rect x="4" y="4" width="6.5" height="6.5" fill="#222" stroke="#222" stroke-width="1"/><rect x="1" y="1" width="6.5" height="6.5" fill="#444" stroke="#222" stroke-width="1"/></svg><svg style="left:612px;top:456.0px" width="12" height="12" viewBox="0 0 12 12"><rect x="1" y="1" width="6.5" height="6.5" fill="none" stroke="#aaa" stroke-width="1"/><rect x="4" y="4" width="6.5" height="6.5" fill="none" stroke="#aaa" stroke-width="1"/><rect x="4" y="4" width="3.5" height="3.5" fill="#555"/></svg><svg style="left:639px;top:456.0px" width="12" height="12" viewBox="0 0 12 12"><rect x="1" y="1" width="6.5" height="6.5" fill="none" stroke="#222" stroke-width="1"/><rect x="4" y="4" width="6.5" height="6.5" fill="none" stroke="#222" stroke-width="1"/></svg><svg style="left:666px;top:456.0px" width="12" height="12" viewBox="0 0 12 12"><rect x="1" y="1" width="6.5" height="6.5" fill="none" stroke="#666" stroke-width="1"/><rect x="4" y="4" width="6.5" height="6.5" fill="#ddd" stroke="#222" stroke-width="1"/></svg><div style="left:476.5px;top:501.0px;width:168.5px;height:60px;background:#d6d6d6;border:1px solid #8e8e8e;border-top:0"></div><div class="ph" style="left:476.5px;top:501.0px;width:168.5px;height:9px;"></div><svg style="left:624.0px;top:503.0px" width="7" height="5" viewBox="0 0 7 5"><path d="M3 0V5L0 2.5ZM7 0V5L4 2.5Z" fill="#333"/></svg><svg style="left:636.0px;top:502.8px" width="6" height="6" viewBox="0 0 6 6"><path d="M.5 .5L5 5M5 .5L.5 5" stroke="#333" stroke-width="1.2"/></svg><div class="tabrow" style="left:477px;top:510.0px;width:167.5px;height:13px;"></div><svg style="left:631.5px;top:514.0px" width="10" height="6" viewBox="0 0 10 6"><path d="M0 1.5L2.5 3L0 4.5Z" fill="#333"/><path d="M4 .8H9.5M4 3H9.5M4 5.2H9.5" stroke="#777" stroke-width="1.3"/></svg><div style="left:479px;top:510.0px;width:30px;height:13.5px;background:#d6d6d6;border-left:1px solid #e8e8e8;border-right:1px solid #888"></div><svg style="left:482px;top:513.5px" width="4" height="7" viewBox="0 0 4 7"><path d="M2 .6L3.5 2.6H.5ZM2 6.4L3.5 4.4H.5Z" fill="none" stroke="#333" stroke-width=".8"/></svg><span class="t" style="left:487.5px;top:512.3px;font-size:9.2px;color:#111;letter-spacing:-.3px">颜色</span><svg style="left:481.5px;top:527.0px" width="8" height="8" viewBox="0 0 8 8"><rect x=".5" y=".5" width="4.5" height="4.5" fill="#fff" stroke="#222"/><rect x="3" y="3" width="4.5" height="4.5" fill="#fff" stroke="#111" stroke-width="1.6"/></svg><svg style="left:495px;top:527.0px" width="9" height="8" viewBox="0 0 9 8"><path d="M1 4C1 1.5 4 1 6 3M6 3L3.5 3.2M6 3L5.8 .6M7.5 4C7.5 6.5 4 7 2 5" fill="none" stroke="#222" stroke-width="1.1"/></svg><div style="left:489px;top:548.0px;width:12px;height:12px;background:#111"></div><div style="left:492.5px;top:551.5px;width:6px;height:6px;background:#ccc"></div><div style="left:480.5px;top:540.0px;width:15px;height:15px;background:#fff;border:1px solid #888"></div><span class="m" style="left:515.5px;top:531.5px;font-size:8.6px;color:#111;font-weight:bold">C</span><div style="left:528px;top:533.0px;width:76px;height:5.4px;background:linear-gradient(90deg,#fff,#62b8e6 42%,#1490d4 80%);border:1px solid #9a9a9a;border-width:1px 0 0 0"></div><svg style="left:525.5px;top:538.0px" width="6" height="5" viewBox="0 0 6 5"><path d="M3 .5L5.5 4.5H.5Z" fill="#fff" stroke="#555" stroke-width=".8"/></svg><div class="in" style="left:608px;top:529.0px;width:24.5px;height:14.5px;"></div><span class="m" style="left:611px;top:532.0px;font-size:9px;color:#111;">0</span><span class="m" style="left:634.5px;top:532.0px;font-size:8.4px;color:#111;font-weight:bold">%</span><span class="m" style="left:515.5px;top:550.5px;font-size:8.6px;color:#111;font-weight:bold">M</span><div style="left:528px;top:552.0px;width:76px;height:5.4px;background:linear-gradient(90deg,#fff,#e88cae 42%,#d43a76 80%);border:1px solid #9a9a9a;border-width:1px 0 0 0"></div><svg style="left:525.5px;top:557.0px" width="6" height="5" viewBox="0 0 6 5"><path d="M3 .5L5.5 4.5H.5Z" fill="#fff" stroke="#555" stroke-width=".8"/></svg><div class="in" style="left:608px;top:548.0px;width:24.5px;height:14.5px;"></div><span class="m" style="left:611px;top:551.0px;font-size:9px;color:#111;">0</span><span class="m" style="left:634.5px;top:551.0px;font-size:8.4px;color:#111;font-weight:bold">%</span></div></div>
</body></html>
